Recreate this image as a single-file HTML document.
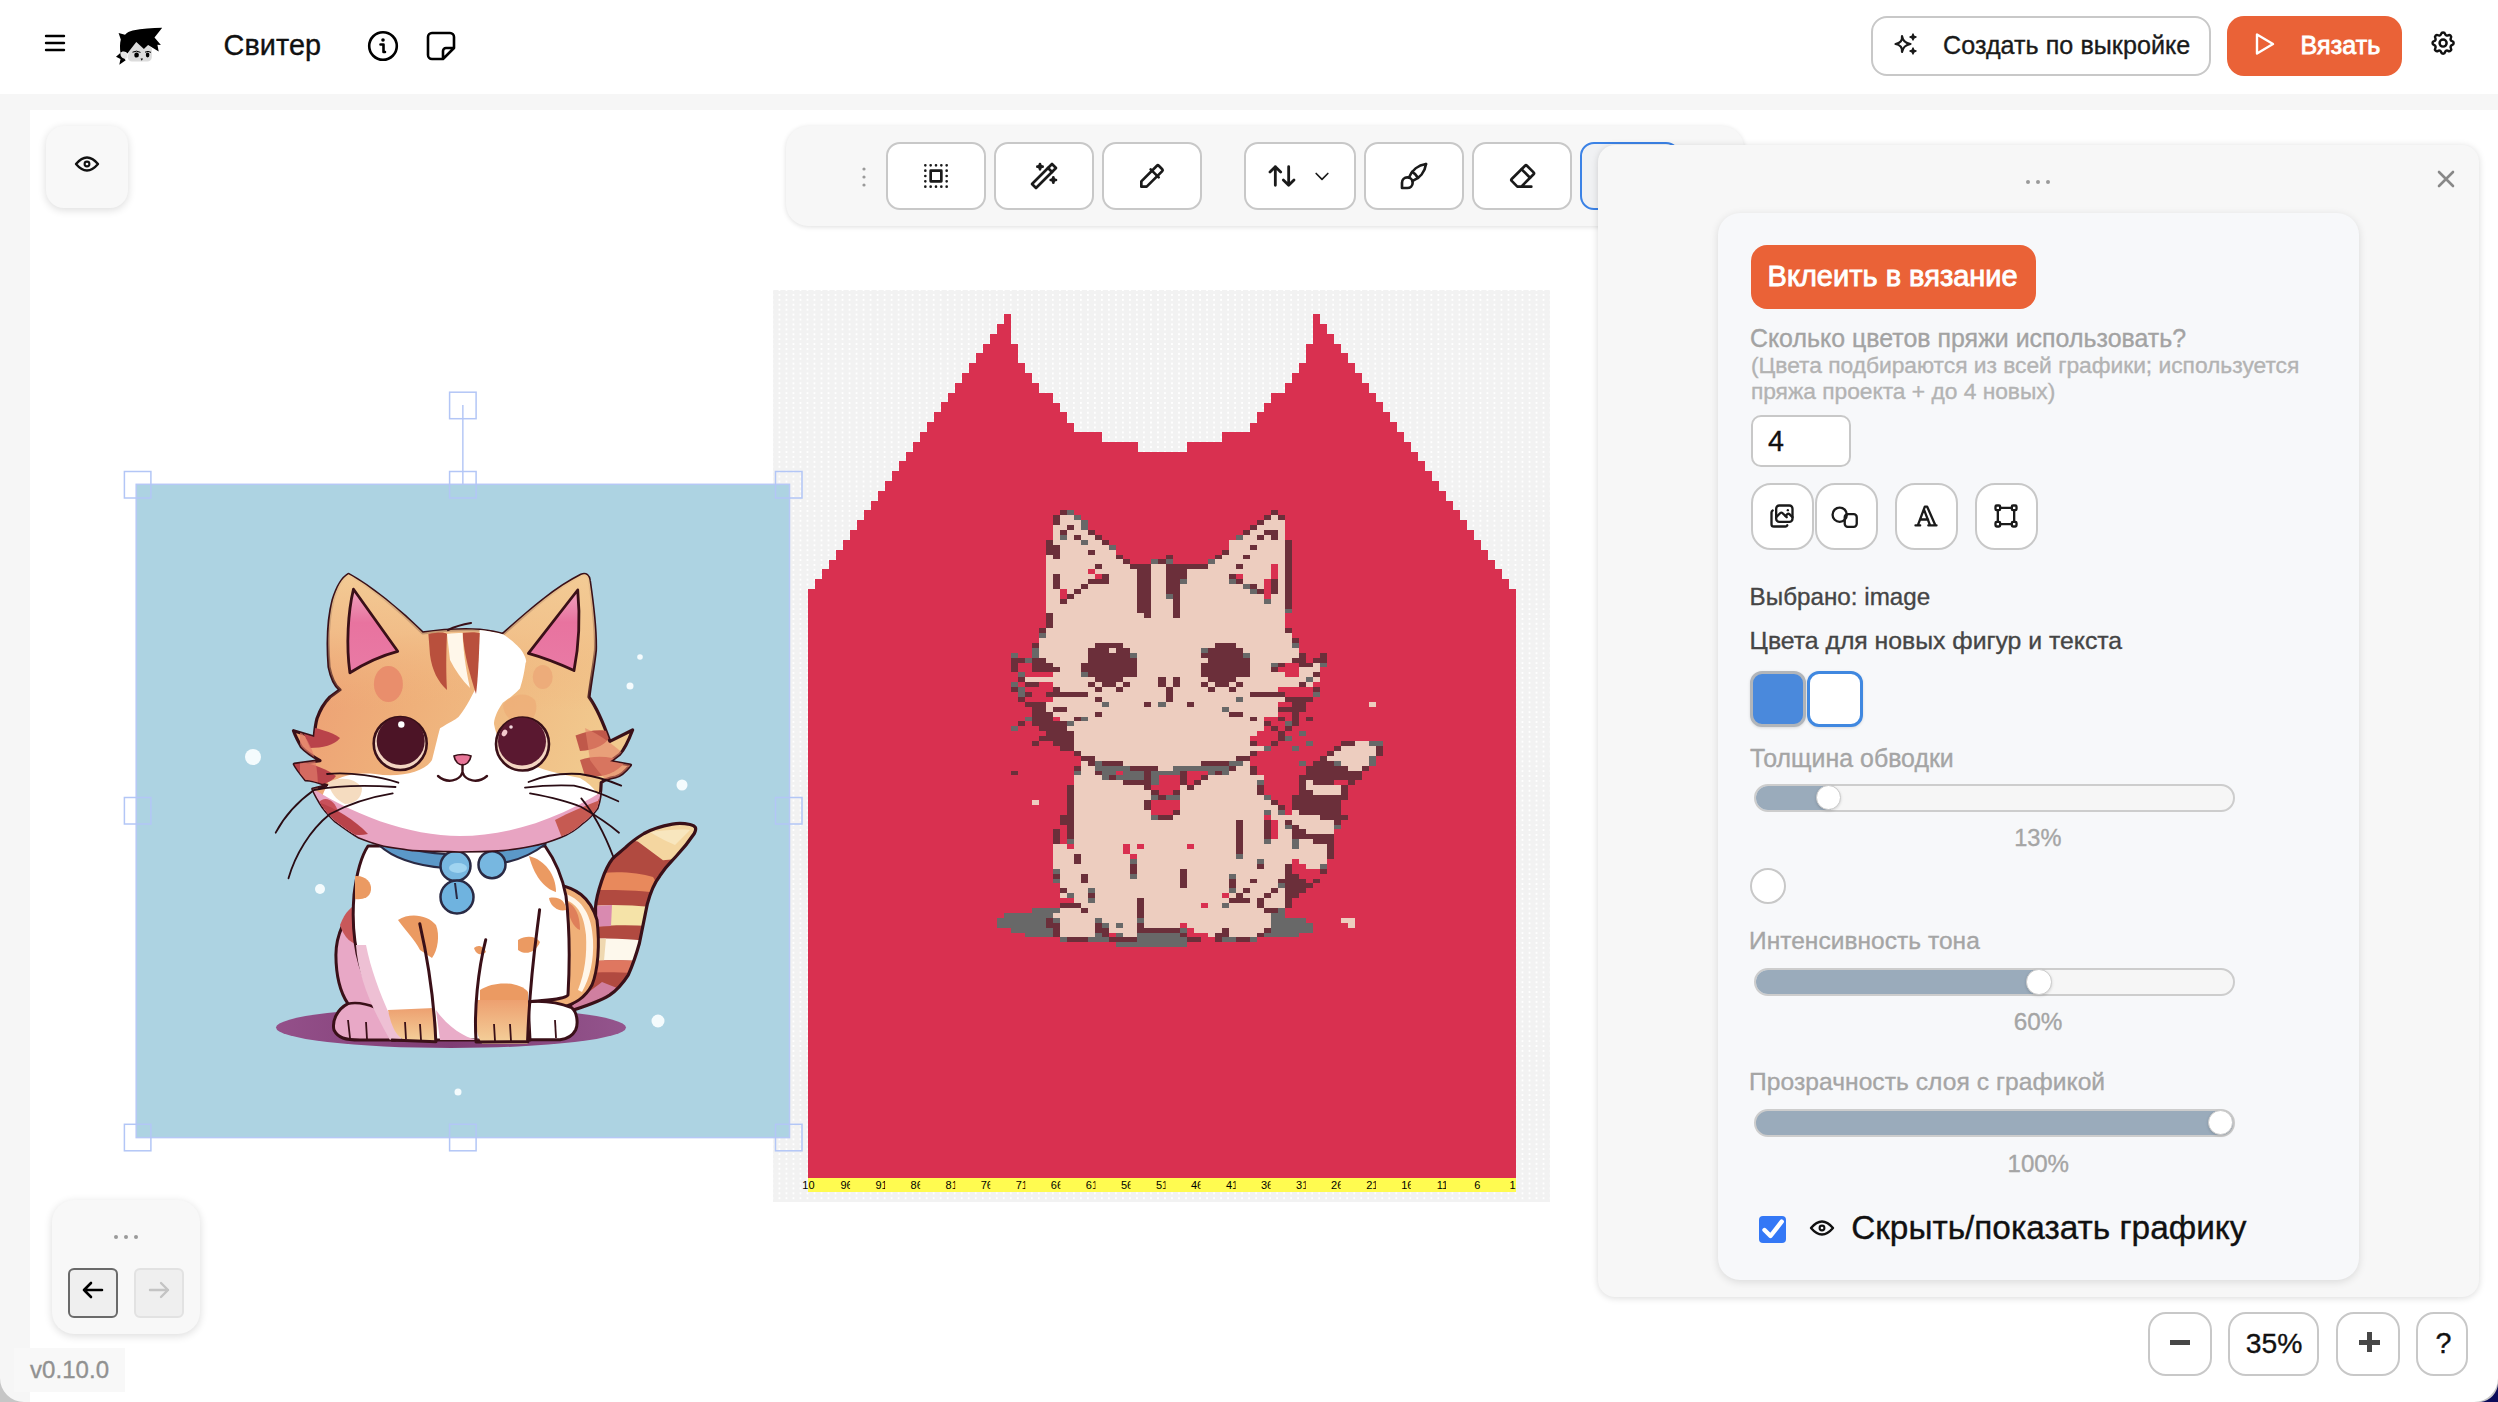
<!DOCTYPE html>
<html><head><meta charset="utf-8">
<style>
*{box-sizing:border-box;margin:0;padding:0}
html,body{width:2498px;height:1402px;overflow:hidden;background:#fff;font-family:"Liberation Sans",sans-serif;color:#111}
.a{position:absolute}
.t{position:absolute;white-space:nowrap;line-height:1;-webkit-text-stroke:0.35px currentColor}
.btn{position:absolute;background:#fff;border:2px solid #c8c8c8;border-radius:14px}
svg{position:absolute;overflow:visible}
</style></head><body>
<!-- gray band and left strip -->
<div class="a" style="left:0;top:94px;width:2498px;height:16px;background:#f6f6f6"></div>
<div class="a" style="left:0;top:94px;width:30px;height:1308px;background:#f6f6f6"></div>

<!-- HEADER -->
<svg style="left:44px;top:34px" width="22" height="18" viewBox="0 0 22 18"><g stroke="#000" stroke-width="2.4" stroke-linecap="round"><line x1="2" y1="2" x2="20" y2="2"/><line x1="2" y1="9" x2="20" y2="9"/><line x1="2" y1="16" x2="20" y2="16"/></g></svg>
<svg style="left:0;top:0" width="200" height="90" viewBox="0 0 200 90">
<path d="M128.9 51.6 L136.3 42 L143.9 49 L148.1 44.9 L152 48.4 L151.8 57.5 C151.5 60 149.5 61.5 147.5 61.5 L132 61.5 C129.5 61.5 128 59.5 127.6 57.4 Z" fill="#dcdcdc"/>
<circle cx="123.8" cy="55.5" r="3.6" fill="#e4e4e4"/>
<path d="M118.6 33 L125 34.7 C127 32.5 129.5 31.2 132.7 30.5 C142 28.7 152 28.2 162.2 27.8 L154.5 37.5 L160.9 44.9 L157.4 44.8 L158.7 51.6 L148.1 44.9 L143.9 49 L136.3 42 L128.9 51.6 L127.5 53.6 C126.5 51.8 124.6 51.2 122.5 51.6 L120.6 52.8 L116 56.8 L120.5 59 L119.3 64.8 L125.7 60.2 L124.5 58.8 C121.5 58.2 120.3 55.8 120.5 53.5 C119.8 48 119.8 43 120.8 39.5 Z" fill="#000"/>
<ellipse cx="136.6" cy="55" rx="2.3" ry="2.6" fill="#000"/><ellipse cx="147.6" cy="55" rx="1.8" ry="2.4" fill="#000"/>
<path d="M132.5 52.2 Q136.6 50 140.5 52.4 M145 52.2 Q148 50.5 151 52.4" stroke="#000" stroke-width="1" fill="none"/>
<path d="M140.5 58.5 L143 58.5 L141.8 60.8Z" fill="#000"/>
</svg>
<div class="t" style="left:223.6px;top:31.2px;font-size:28.8px;letter-spacing:0.08px;color:#111">Свитер</div>
<svg style="left:367px;top:30px" width="32" height="32" viewBox="0 0 32 32"><circle cx="16" cy="16" r="13.8" fill="none" stroke="#000" stroke-width="2.6"/><circle cx="16" cy="10" r="1.8" fill="#000"/><path d="M13.5 14.5h3v7.5h1.5" fill="none" stroke="#000" stroke-width="2.6" stroke-linecap="round" stroke-linejoin="round"/></svg>
<svg style="left:426px;top:31px" width="30" height="30" viewBox="0 0 30 30"><path d="M28 17V6a4 4 0 0 0-4-4H6a4 4 0 0 0-4 4v18a4 4 0 0 0 4 4h11z M17 28v-8a3 3 0 0 1 3-3h8" fill="none" stroke="#000" stroke-width="2.6" stroke-linejoin="round"/></svg>

<div class="btn" style="left:1871px;top:16px;width:340px;height:60px;border-radius:16px"></div>
<svg style="left:1890px;top:30px" width="30" height="30" viewBox="0 0 30 30"><path d="M12 6.2 Q12.8 12.8 5.5 14 Q12.8 15.3 12 22 Q13.2 15.3 20.5 14 Q13.2 12.8 12 6.2Z" fill="none" stroke="#1a1a1a" stroke-width="2.2" stroke-linejoin="round"/><path d="M23 4 Q23.4 6.6 26 7 Q23.4 7.4 23 10 Q22.6 7.4 20 7 Q22.6 6.6 23 4Z M23 18 Q23.4 20.6 26 21 Q23.4 21.4 23 24 Q22.6 21.4 20 21 Q22.6 20.6 23 18Z" fill="#1a1a1a" stroke="#1a1a1a" stroke-width="1.4" stroke-linejoin="round"/></svg>
<div class="t" style="left:1943.0px;top:33.2px;font-size:25.1px;letter-spacing:0.05px;color:#1a1a1a">Создать по выкройке</div>

<div class="a" style="left:2227px;top:16px;width:175px;height:60px;border-radius:17px;background:#ea6237"></div>
<svg style="left:2254px;top:32px" width="22" height="24" viewBox="0 0 22 24"><path d="M3 2.5v19l16-9.5z" fill="none" stroke="#fff" stroke-width="2.4" stroke-linejoin="round"/></svg>
<div class="t" style="left:2300.6px;top:33.1px;font-size:25.0px;letter-spacing:0.08px;-webkit-text-stroke:0.85px #fff;color:#fff">Вязать</div>
<svg style="left:2428.9px;top:28.9px" width="28.2" height="28.2" viewBox="0 0 24 24" fill="none" stroke="#111" stroke-width="2.1" stroke-linecap="round" stroke-linejoin="round"><path d="M10.325 4.317c.426-1.756 2.924-1.756 3.35 0a1.724 1.724 0 0 0 2.573 1.066c1.543-.94 3.31.826 2.37 2.37a1.724 1.724 0 0 0 1.065 2.572c1.756.426 1.756 2.924 0 3.35a1.724 1.724 0 0 0-1.066 2.573c.94 1.543-.826 3.31-2.37 2.37a1.724 1.724 0 0 0-2.572 1.065c-.426 1.756-2.924 1.756-3.35 0a1.724 1.724 0 0 0-2.573-1.066c-1.543.94-3.31-.826-2.37-2.37a1.724 1.724 0 0 0-1.065-2.572c-1.756-.426-1.756-2.924 0-3.35a1.724 1.724 0 0 0 1.066-2.573c-.94-1.543.826-3.31 2.37-2.37c1 .608 2.296.07 2.572-1.065z"/><circle cx="12" cy="12" r="3"/></svg>

<!-- LEFT eye button -->
<div class="a" style="left:46px;top:126px;width:82px;height:82px;border-radius:18px;background:#f8f8f8;box-shadow:0 2px 8px rgba(0,0,0,.14)"></div>
<svg style="left:74px;top:153px" width="26" height="22" viewBox="0 0 26 22"><path d="M2 11 Q13 -2 24 11 Q13 24 2 11Z" fill="none" stroke="#111" stroke-width="2.4" stroke-linejoin="round"/><circle cx="13" cy="11" r="2.4" fill="none" stroke="#111" stroke-width="2.1"/></svg>

<!-- CANVAS -->
<!-- SWEATER START --><svg style="left:0;top:0" width="2498" height="1402" viewBox="0 0 2498 1402" shape-rendering="crispEdges">
<defs><clipPath id="lc0"><rect x="791.5" y="1170" width="23.5" height="30"/></clipPath><clipPath id="lc1"><rect x="826.6" y="1170" width="23.5" height="30"/></clipPath><clipPath id="lc2"><rect x="861.6" y="1170" width="23.5" height="30"/></clipPath><clipPath id="lc3"><rect x="896.7" y="1170" width="23.5" height="30"/></clipPath><clipPath id="lc4"><rect x="931.7" y="1170" width="23.5" height="30"/></clipPath><clipPath id="lc5"><rect x="966.8" y="1170" width="23.5" height="30"/></clipPath><clipPath id="lc6"><rect x="1001.8" y="1170" width="23.5" height="30"/></clipPath><clipPath id="lc7"><rect x="1036.9" y="1170" width="23.5" height="30"/></clipPath><clipPath id="lc8"><rect x="1071.9" y="1170" width="23.5" height="30"/></clipPath><clipPath id="lc9"><rect x="1107.0" y="1170" width="23.5" height="30"/></clipPath><clipPath id="lc10"><rect x="1142.0" y="1170" width="23.5" height="30"/></clipPath><clipPath id="lc11"><rect x="1177.0" y="1170" width="23.5" height="30"/></clipPath><clipPath id="lc12"><rect x="1212.1" y="1170" width="23.5" height="30"/></clipPath><clipPath id="lc13"><rect x="1247.1" y="1170" width="23.5" height="30"/></clipPath><clipPath id="lc14"><rect x="1282.2" y="1170" width="23.5" height="30"/></clipPath><clipPath id="lc15"><rect x="1317.2" y="1170" width="23.5" height="30"/></clipPath><clipPath id="lc16"><rect x="1352.3" y="1170" width="23.5" height="30"/></clipPath><clipPath id="lc17"><rect x="1387.3" y="1170" width="23.5" height="30"/></clipPath><clipPath id="lc18"><rect x="1422.4" y="1170" width="23.5" height="30"/></clipPath><clipPath id="lc19"><rect x="1457.4" y="1170" width="23.5" height="30"/></clipPath><clipPath id="lc20"><rect x="1492.5" y="1170" width="23.5" height="30"/></clipPath><pattern id="dots" x="806.6" y="313.6" width="7.0099" height="4.909" patternUnits="userSpaceOnUse"><rect width="7.0099" height="4.909" fill="#f2f2f2"/><rect x="0" y="0" width="1.7" height="1.6" fill="#ffffff"/></pattern></defs>
<rect x="773" y="290" width="777" height="912" fill="url(#dots)"/>
<path d="M808.0 1178.0 L808.0 589.0 L815.0 589.0 L815.0 579.2 L822.0 579.2 L822.0 569.4 L829.0 569.4 L829.0 559.5 L836.0 559.5 L836.0 549.7 L843.0 549.7 L843.0 539.9 L850.1 539.9 L850.1 530.1 L857.1 530.1 L857.1 520.3 L864.1 520.3 L864.1 510.4 L871.1 510.4 L871.1 500.6 L878.1 500.6 L878.1 490.8 L885.1 490.8 L885.1 481.0 L892.1 481.0 L892.1 471.2 L899.1 471.2 L899.1 461.3 L906.1 461.3 L906.1 451.5 L913.1 451.5 L913.1 441.7 L920.2 441.7 L920.2 431.9 L927.2 431.9 L927.2 422.1 L934.2 422.1 L934.2 412.2 L941.2 412.2 L941.2 402.4 L948.2 402.4 L948.2 392.6 L955.2 392.6 L955.2 382.8 L962.2 382.8 L962.2 373.0 L969.2 373.0 L969.2 363.1 L976.2 363.1 L976.2 353.3 L983.2 353.3 L983.2 343.5 L990.3 343.5 L990.3 333.7 L997.3 333.7 L997.3 323.9 L1004.3 323.9 L1004.3 314.0 L1011.3 314.0 L1011.3 343.7 L1018.3 343.7 L1018.3 363.0 L1025.3 363.0 L1025.3 372.9 L1032.3 372.9 L1032.3 383.0 L1039.3 383.0 L1039.3 392.9 L1046.3 392.9 L1046.3 392.9 L1053.3 392.9 L1053.3 403.0 L1060.4 403.0 L1060.4 412.4 L1067.4 412.4 L1067.4 423.0 L1074.4 423.0 L1074.4 432.4 L1081.4 432.4 L1081.4 432.4 L1088.4 432.4 L1088.4 432.4 L1095.4 432.4 L1095.4 432.4 L1102.4 432.4 L1102.4 441.9 L1109.4 441.9 L1109.4 441.9 L1116.4 441.9 L1116.4 441.9 L1123.4 441.9 L1123.4 441.9 L1130.5 441.9 L1130.5 441.9 L1137.5 441.9 L1137.5 452.0 L1144.5 452.0 L1144.5 452.0 L1151.5 452.0 L1151.5 452.0 L1158.5 452.0 L1158.5 452.0 L1165.5 452.0 L1165.5 452.0 L1172.5 452.0 L1172.5 452.0 L1179.5 452.0 L1179.5 452.0 L1186.5 452.0 L1186.5 441.9 L1193.5 441.9 L1193.5 441.9 L1200.6 441.9 L1200.6 441.9 L1207.6 441.9 L1207.6 441.9 L1214.6 441.9 L1214.6 441.9 L1221.6 441.9 L1221.6 432.4 L1228.6 432.4 L1228.6 432.4 L1235.6 432.4 L1235.6 432.4 L1242.6 432.4 L1242.6 432.4 L1249.6 432.4 L1249.6 423.0 L1256.6 423.0 L1256.6 412.4 L1263.6 412.4 L1263.6 403.0 L1270.7 403.0 L1270.7 392.9 L1277.7 392.9 L1277.7 392.9 L1284.7 392.9 L1284.7 383.0 L1291.7 383.0 L1291.7 372.9 L1298.7 372.9 L1298.7 363.0 L1305.7 363.0 L1305.7 343.7 L1312.7 343.7 L1312.7 314.0 L1319.7 314.0 L1319.7 323.9 L1326.7 323.9 L1326.7 333.7 L1333.7 333.7 L1333.7 343.5 L1340.8 343.5 L1340.8 353.3 L1347.8 353.3 L1347.8 363.1 L1354.8 363.1 L1354.8 373.0 L1361.8 373.0 L1361.8 382.8 L1368.8 382.8 L1368.8 392.6 L1375.8 392.6 L1375.8 402.4 L1382.8 402.4 L1382.8 412.2 L1389.8 412.2 L1389.8 422.1 L1396.8 422.1 L1396.8 431.9 L1403.8 431.9 L1403.8 441.7 L1410.9 441.7 L1410.9 451.5 L1417.9 451.5 L1417.9 461.3 L1424.9 461.3 L1424.9 471.2 L1431.9 471.2 L1431.9 481.0 L1438.9 481.0 L1438.9 490.8 L1445.9 490.8 L1445.9 500.6 L1452.9 500.6 L1452.9 510.4 L1459.9 510.4 L1459.9 520.3 L1466.9 520.3 L1466.9 530.1 L1473.9 530.1 L1473.9 539.9 L1481.0 539.9 L1481.0 549.7 L1488.0 549.7 L1488.0 559.5 L1495.0 559.5 L1495.0 569.4 L1502.0 569.4 L1502.0 579.2 L1509.0 579.2 L1509.0 589.0 L1516.0 589.0 L1516.0 1178.0Z" fill="#d93050"/>
<rect x="1060.36" y="510.36" width="7.01" height="4.91" fill="#6b2f3a"/><rect x="1067.37" y="510.36" width="7.01" height="4.91" fill="#686868"/><rect x="1270.65" y="510.36" width="7.01" height="4.91" fill="#6b2f3a"/><rect x="1053.35" y="515.27" width="7.01" height="4.91" fill="#6b2f3a"/><rect x="1060.36" y="515.27" width="14.02" height="4.91" fill="#edcdbf"/><rect x="1074.38" y="515.27" width="7.01" height="4.91" fill="#686868"/><rect x="1263.64" y="515.27" width="7.01" height="4.91" fill="#6b2f3a"/><rect x="1270.65" y="515.27" width="7.01" height="4.91" fill="#edcdbf"/><rect x="1277.66" y="515.27" width="7.01" height="4.91" fill="#6b2f3a"/><rect x="1053.35" y="520.18" width="7.01" height="4.91" fill="#6b2f3a"/><rect x="1060.36" y="520.18" width="21.03" height="4.91" fill="#edcdbf"/><rect x="1081.39" y="520.18" width="7.01" height="4.91" fill="#686868"/><rect x="1256.63" y="520.18" width="7.01" height="4.91" fill="#6b2f3a"/><rect x="1263.64" y="520.18" width="21.03" height="4.91" fill="#edcdbf"/><rect x="1053.35" y="525.09" width="14.02" height="4.91" fill="#edcdbf"/><rect x="1067.37" y="525.09" width="7.01" height="4.91" fill="#6b2f3a"/><rect x="1074.38" y="525.09" width="7.01" height="4.91" fill="#edcdbf"/><rect x="1081.39" y="525.09" width="7.01" height="4.91" fill="#686868"/><rect x="1249.62" y="525.09" width="7.01" height="4.91" fill="#6b2f3a"/><rect x="1256.63" y="525.09" width="28.04" height="4.91" fill="#edcdbf"/><rect x="1053.35" y="530.00" width="7.01" height="4.91" fill="#edcdbf"/><rect x="1060.36" y="530.00" width="7.01" height="4.91" fill="#6b2f3a"/><rect x="1067.37" y="530.00" width="21.03" height="4.91" fill="#edcdbf"/><rect x="1088.40" y="530.00" width="7.01" height="4.91" fill="#6b2f3a"/><rect x="1242.61" y="530.00" width="7.01" height="4.91" fill="#6b2f3a"/><rect x="1249.62" y="530.00" width="14.02" height="4.91" fill="#edcdbf"/><rect x="1263.64" y="530.00" width="14.02" height="4.91" fill="#6b2f3a"/><rect x="1277.66" y="530.00" width="7.01" height="4.91" fill="#edcdbf"/><rect x="1053.35" y="534.91" width="7.01" height="4.91" fill="#edcdbf"/><rect x="1060.36" y="534.91" width="7.01" height="4.91" fill="#686868"/><rect x="1067.37" y="534.91" width="7.01" height="4.91" fill="#edcdbf"/><rect x="1074.38" y="534.91" width="7.01" height="4.91" fill="#6b2f3a"/><rect x="1081.39" y="534.91" width="14.02" height="4.91" fill="#edcdbf"/><rect x="1095.41" y="534.91" width="7.01" height="4.91" fill="#6b2f3a"/><rect x="1235.60" y="534.91" width="7.01" height="4.91" fill="#686868"/><rect x="1242.61" y="534.91" width="14.02" height="4.91" fill="#edcdbf"/><rect x="1256.63" y="534.91" width="7.01" height="4.91" fill="#6b2f3a"/><rect x="1263.64" y="534.91" width="7.01" height="4.91" fill="#edcdbf"/><rect x="1270.65" y="534.91" width="7.01" height="4.91" fill="#6b2f3a"/><rect x="1277.66" y="534.91" width="7.01" height="4.91" fill="#edcdbf"/><rect x="1046.34" y="539.82" width="7.01" height="4.91" fill="#6b2f3a"/><rect x="1053.35" y="539.82" width="28.04" height="4.91" fill="#edcdbf"/><rect x="1081.39" y="539.82" width="7.01" height="4.91" fill="#686868"/><rect x="1088.40" y="539.82" width="14.02" height="4.91" fill="#edcdbf"/><rect x="1102.42" y="539.82" width="7.01" height="4.91" fill="#6b2f3a"/><rect x="1228.59" y="539.82" width="56.08" height="4.91" fill="#edcdbf"/><rect x="1284.67" y="539.82" width="7.01" height="4.91" fill="#6b2f3a"/><rect x="1046.34" y="544.73" width="14.02" height="4.91" fill="#6b2f3a"/><rect x="1060.36" y="544.73" width="49.07" height="4.91" fill="#edcdbf"/><rect x="1109.43" y="544.73" width="7.01" height="4.91" fill="#686868"/><rect x="1228.59" y="544.73" width="21.03" height="4.91" fill="#edcdbf"/><rect x="1249.62" y="544.73" width="7.01" height="4.91" fill="#6b2f3a"/><rect x="1256.63" y="544.73" width="28.04" height="4.91" fill="#edcdbf"/><rect x="1284.67" y="544.73" width="7.01" height="4.91" fill="#6b2f3a"/><rect x="1046.34" y="549.64" width="14.02" height="4.91" fill="#6b2f3a"/><rect x="1060.36" y="549.64" width="28.04" height="4.91" fill="#edcdbf"/><rect x="1088.40" y="549.64" width="7.01" height="4.91" fill="#6b2f3a"/><rect x="1095.41" y="549.64" width="21.03" height="4.91" fill="#edcdbf"/><rect x="1221.58" y="549.64" width="7.01" height="4.91" fill="#6b2f3a"/><rect x="1228.59" y="549.64" width="56.08" height="4.91" fill="#edcdbf"/><rect x="1284.67" y="549.64" width="7.01" height="4.91" fill="#6b2f3a"/><rect x="1046.34" y="554.55" width="7.01" height="4.91" fill="#edcdbf"/><rect x="1053.35" y="554.55" width="7.01" height="4.91" fill="#6b2f3a"/><rect x="1060.36" y="554.55" width="56.08" height="4.91" fill="#edcdbf"/><rect x="1116.44" y="554.55" width="7.01" height="4.91" fill="#6b2f3a"/><rect x="1165.50" y="554.55" width="7.01" height="4.91" fill="#6b2f3a"/><rect x="1214.57" y="554.55" width="7.01" height="4.91" fill="#6b2f3a"/><rect x="1221.58" y="554.55" width="21.03" height="4.91" fill="#edcdbf"/><rect x="1242.61" y="554.55" width="7.01" height="4.91" fill="#6b2f3a"/><rect x="1249.62" y="554.55" width="35.05" height="4.91" fill="#edcdbf"/><rect x="1284.67" y="554.55" width="7.01" height="4.91" fill="#6b2f3a"/><rect x="1046.34" y="559.45" width="77.11" height="4.91" fill="#edcdbf"/><rect x="1123.45" y="559.45" width="7.01" height="4.91" fill="#6b2f3a"/><rect x="1151.49" y="559.45" width="7.01" height="4.91" fill="#686868"/><rect x="1158.49" y="559.45" width="7.01" height="4.91" fill="#6b2f3a"/><rect x="1165.50" y="559.45" width="7.01" height="4.91" fill="#686868"/><rect x="1207.56" y="559.45" width="7.01" height="4.91" fill="#686868"/><rect x="1214.57" y="559.45" width="70.10" height="4.91" fill="#edcdbf"/><rect x="1284.67" y="559.45" width="7.01" height="4.91" fill="#6b2f3a"/><rect x="1046.34" y="564.36" width="49.07" height="4.91" fill="#edcdbf"/><rect x="1095.41" y="564.36" width="7.01" height="4.91" fill="#6b2f3a"/><rect x="1102.42" y="564.36" width="28.04" height="4.91" fill="#edcdbf"/><rect x="1130.46" y="564.36" width="21.03" height="4.91" fill="#6b2f3a"/><rect x="1151.49" y="564.36" width="14.02" height="4.91" fill="#edcdbf"/><rect x="1165.50" y="564.36" width="42.06" height="4.91" fill="#6b2f3a"/><rect x="1207.56" y="564.36" width="28.04" height="4.91" fill="#edcdbf"/><rect x="1235.60" y="564.36" width="7.01" height="4.91" fill="#6b2f3a"/><rect x="1242.61" y="564.36" width="28.04" height="4.91" fill="#edcdbf"/><rect x="1277.66" y="564.36" width="7.01" height="4.91" fill="#edcdbf"/><rect x="1284.67" y="564.36" width="7.01" height="4.91" fill="#6b2f3a"/><rect x="1046.34" y="569.27" width="42.06" height="4.91" fill="#edcdbf"/><rect x="1095.41" y="569.27" width="42.06" height="4.91" fill="#edcdbf"/><rect x="1137.47" y="569.27" width="14.02" height="4.91" fill="#6b2f3a"/><rect x="1151.49" y="569.27" width="14.02" height="4.91" fill="#edcdbf"/><rect x="1165.50" y="569.27" width="21.03" height="4.91" fill="#6b2f3a"/><rect x="1186.53" y="569.27" width="84.12" height="4.91" fill="#edcdbf"/><rect x="1277.66" y="569.27" width="7.01" height="4.91" fill="#edcdbf"/><rect x="1284.67" y="569.27" width="7.01" height="4.91" fill="#6b2f3a"/><rect x="1046.34" y="574.18" width="7.01" height="4.91" fill="#edcdbf"/><rect x="1053.35" y="574.18" width="7.01" height="4.91" fill="#6b2f3a"/><rect x="1060.36" y="574.18" width="35.05" height="4.91" fill="#edcdbf"/><rect x="1102.42" y="574.18" width="7.01" height="4.91" fill="#6b2f3a"/><rect x="1109.43" y="574.18" width="28.04" height="4.91" fill="#edcdbf"/><rect x="1137.47" y="574.18" width="14.02" height="4.91" fill="#6b2f3a"/><rect x="1151.49" y="574.18" width="14.02" height="4.91" fill="#edcdbf"/><rect x="1165.50" y="574.18" width="21.03" height="4.91" fill="#6b2f3a"/><rect x="1186.53" y="574.18" width="42.06" height="4.91" fill="#edcdbf"/><rect x="1228.59" y="574.18" width="7.01" height="4.91" fill="#6b2f3a"/><rect x="1242.61" y="574.18" width="28.04" height="4.91" fill="#edcdbf"/><rect x="1277.66" y="574.18" width="7.01" height="4.91" fill="#edcdbf"/><rect x="1284.67" y="574.18" width="7.01" height="4.91" fill="#6b2f3a"/><rect x="1046.34" y="579.09" width="7.01" height="4.91" fill="#edcdbf"/><rect x="1053.35" y="579.09" width="7.01" height="4.91" fill="#6b2f3a"/><rect x="1060.36" y="579.09" width="28.04" height="4.91" fill="#edcdbf"/><rect x="1088.40" y="579.09" width="21.03" height="4.91" fill="#6b2f3a"/><rect x="1109.43" y="579.09" width="28.04" height="4.91" fill="#edcdbf"/><rect x="1137.47" y="579.09" width="14.02" height="4.91" fill="#6b2f3a"/><rect x="1151.49" y="579.09" width="14.02" height="4.91" fill="#edcdbf"/><rect x="1165.50" y="579.09" width="14.02" height="4.91" fill="#6b2f3a"/><rect x="1179.52" y="579.09" width="7.01" height="4.91" fill="#686868"/><rect x="1186.53" y="579.09" width="42.06" height="4.91" fill="#edcdbf"/><rect x="1228.59" y="579.09" width="7.01" height="4.91" fill="#686868"/><rect x="1235.60" y="579.09" width="7.01" height="4.91" fill="#6b2f3a"/><rect x="1242.61" y="579.09" width="21.03" height="4.91" fill="#edcdbf"/><rect x="1270.65" y="579.09" width="7.01" height="4.91" fill="#6b2f3a"/><rect x="1277.66" y="579.09" width="7.01" height="4.91" fill="#edcdbf"/><rect x="1284.67" y="579.09" width="7.01" height="4.91" fill="#6b2f3a"/><rect x="1046.34" y="584.00" width="7.01" height="4.91" fill="#edcdbf"/><rect x="1053.35" y="584.00" width="7.01" height="4.91" fill="#6b2f3a"/><rect x="1060.36" y="584.00" width="21.03" height="4.91" fill="#edcdbf"/><rect x="1081.39" y="584.00" width="7.01" height="4.91" fill="#6b2f3a"/><rect x="1088.40" y="584.00" width="49.07" height="4.91" fill="#edcdbf"/><rect x="1137.47" y="584.00" width="14.02" height="4.91" fill="#6b2f3a"/><rect x="1151.49" y="584.00" width="14.02" height="4.91" fill="#edcdbf"/><rect x="1165.50" y="584.00" width="14.02" height="4.91" fill="#6b2f3a"/><rect x="1179.52" y="584.00" width="63.09" height="4.91" fill="#edcdbf"/><rect x="1242.61" y="584.00" width="7.01" height="4.91" fill="#686868"/><rect x="1249.62" y="584.00" width="7.01" height="4.91" fill="#6b2f3a"/><rect x="1256.63" y="584.00" width="7.01" height="4.91" fill="#edcdbf"/><rect x="1270.65" y="584.00" width="7.01" height="4.91" fill="#6b2f3a"/><rect x="1277.66" y="584.00" width="7.01" height="4.91" fill="#edcdbf"/><rect x="1284.67" y="584.00" width="7.01" height="4.91" fill="#6b2f3a"/><rect x="1046.34" y="588.91" width="14.02" height="4.91" fill="#edcdbf"/><rect x="1067.37" y="588.91" width="7.01" height="4.91" fill="#edcdbf"/><rect x="1074.38" y="588.91" width="7.01" height="4.91" fill="#6b2f3a"/><rect x="1081.39" y="588.91" width="56.08" height="4.91" fill="#edcdbf"/><rect x="1137.47" y="588.91" width="14.02" height="4.91" fill="#6b2f3a"/><rect x="1151.49" y="588.91" width="14.02" height="4.91" fill="#edcdbf"/><rect x="1165.50" y="588.91" width="14.02" height="4.91" fill="#6b2f3a"/><rect x="1179.52" y="588.91" width="70.10" height="4.91" fill="#edcdbf"/><rect x="1249.62" y="588.91" width="7.01" height="4.91" fill="#686868"/><rect x="1256.63" y="588.91" width="7.01" height="4.91" fill="#6b2f3a"/><rect x="1270.65" y="588.91" width="7.01" height="4.91" fill="#6b2f3a"/><rect x="1277.66" y="588.91" width="7.01" height="4.91" fill="#edcdbf"/><rect x="1284.67" y="588.91" width="7.01" height="4.91" fill="#6b2f3a"/><rect x="1046.34" y="593.82" width="14.02" height="4.91" fill="#edcdbf"/><rect x="1067.37" y="593.82" width="7.01" height="4.91" fill="#6b2f3a"/><rect x="1074.38" y="593.82" width="63.09" height="4.91" fill="#edcdbf"/><rect x="1137.47" y="593.82" width="14.02" height="4.91" fill="#6b2f3a"/><rect x="1151.49" y="593.82" width="14.02" height="4.91" fill="#edcdbf"/><rect x="1165.50" y="593.82" width="7.01" height="4.91" fill="#686868"/><rect x="1172.51" y="593.82" width="7.01" height="4.91" fill="#6b2f3a"/><rect x="1179.52" y="593.82" width="84.12" height="4.91" fill="#edcdbf"/><rect x="1270.65" y="593.82" width="14.02" height="4.91" fill="#edcdbf"/><rect x="1284.67" y="593.82" width="7.01" height="4.91" fill="#6b2f3a"/><rect x="1046.34" y="598.73" width="14.02" height="4.91" fill="#edcdbf"/><rect x="1060.36" y="598.73" width="7.01" height="4.91" fill="#6b2f3a"/><rect x="1067.37" y="598.73" width="70.10" height="4.91" fill="#edcdbf"/><rect x="1137.47" y="598.73" width="14.02" height="4.91" fill="#6b2f3a"/><rect x="1151.49" y="598.73" width="21.03" height="4.91" fill="#edcdbf"/><rect x="1172.51" y="598.73" width="7.01" height="4.91" fill="#6b2f3a"/><rect x="1179.52" y="598.73" width="84.12" height="4.91" fill="#edcdbf"/><rect x="1263.64" y="598.73" width="7.01" height="4.91" fill="#686868"/><rect x="1270.65" y="598.73" width="14.02" height="4.91" fill="#edcdbf"/><rect x="1284.67" y="598.73" width="7.01" height="4.91" fill="#6b2f3a"/><rect x="1046.34" y="603.64" width="91.13" height="4.91" fill="#edcdbf"/><rect x="1137.47" y="603.64" width="14.02" height="4.91" fill="#6b2f3a"/><rect x="1151.49" y="603.64" width="21.03" height="4.91" fill="#edcdbf"/><rect x="1172.51" y="603.64" width="7.01" height="4.91" fill="#6b2f3a"/><rect x="1179.52" y="603.64" width="105.15" height="4.91" fill="#edcdbf"/><rect x="1284.67" y="603.64" width="7.01" height="4.91" fill="#6b2f3a"/><rect x="1046.34" y="608.55" width="91.13" height="4.91" fill="#edcdbf"/><rect x="1137.47" y="608.55" width="14.02" height="4.91" fill="#6b2f3a"/><rect x="1151.49" y="608.55" width="21.03" height="4.91" fill="#edcdbf"/><rect x="1172.51" y="608.55" width="7.01" height="4.91" fill="#6b2f3a"/><rect x="1179.52" y="608.55" width="105.15" height="4.91" fill="#edcdbf"/><rect x="1284.67" y="608.55" width="7.01" height="4.91" fill="#686868"/><rect x="1046.34" y="613.45" width="7.01" height="4.91" fill="#6b2f3a"/><rect x="1053.35" y="613.45" width="91.13" height="4.91" fill="#edcdbf"/><rect x="1144.48" y="613.45" width="7.01" height="4.91" fill="#6b2f3a"/><rect x="1151.49" y="613.45" width="21.03" height="4.91" fill="#edcdbf"/><rect x="1172.51" y="613.45" width="7.01" height="4.91" fill="#6b2f3a"/><rect x="1179.52" y="613.45" width="105.15" height="4.91" fill="#edcdbf"/><rect x="1046.34" y="618.36" width="7.01" height="4.91" fill="#6b2f3a"/><rect x="1053.35" y="618.36" width="231.33" height="4.91" fill="#edcdbf"/><rect x="1046.34" y="623.27" width="7.01" height="4.91" fill="#6b2f3a"/><rect x="1053.35" y="623.27" width="231.33" height="4.91" fill="#edcdbf"/><rect x="1039.33" y="628.18" width="7.01" height="4.91" fill="#6b2f3a"/><rect x="1046.34" y="628.18" width="238.34" height="4.91" fill="#edcdbf"/><rect x="1284.67" y="628.18" width="7.01" height="4.91" fill="#6b2f3a"/><rect x="1039.33" y="633.09" width="7.01" height="4.91" fill="#686868"/><rect x="1046.34" y="633.09" width="245.35" height="4.91" fill="#edcdbf"/><rect x="1039.33" y="638.00" width="252.36" height="4.91" fill="#edcdbf"/><rect x="1291.68" y="638.00" width="7.01" height="4.91" fill="#6b2f3a"/><rect x="1032.32" y="642.91" width="7.01" height="4.91" fill="#6b2f3a"/><rect x="1039.33" y="642.91" width="56.08" height="4.91" fill="#edcdbf"/><rect x="1095.41" y="642.91" width="28.04" height="4.91" fill="#6b2f3a"/><rect x="1123.45" y="642.91" width="91.13" height="4.91" fill="#edcdbf"/><rect x="1214.57" y="642.91" width="21.03" height="4.91" fill="#6b2f3a"/><rect x="1235.60" y="642.91" width="56.08" height="4.91" fill="#edcdbf"/><rect x="1291.68" y="642.91" width="7.01" height="4.91" fill="#686868"/><rect x="1032.32" y="647.82" width="7.01" height="4.91" fill="#686868"/><rect x="1039.33" y="647.82" width="49.07" height="4.91" fill="#edcdbf"/><rect x="1088.40" y="647.82" width="21.03" height="4.91" fill="#6b2f3a"/><rect x="1109.43" y="647.82" width="7.01" height="4.91" fill="#edcdbf"/><rect x="1116.44" y="647.82" width="14.02" height="4.91" fill="#6b2f3a"/><rect x="1130.46" y="647.82" width="70.10" height="4.91" fill="#edcdbf"/><rect x="1200.55" y="647.82" width="7.01" height="4.91" fill="#686868"/><rect x="1207.56" y="647.82" width="35.05" height="4.91" fill="#6b2f3a"/><rect x="1242.61" y="647.82" width="56.08" height="4.91" fill="#edcdbf"/><rect x="1011.29" y="652.73" width="7.01" height="4.91" fill="#686868"/><rect x="1032.32" y="652.73" width="7.01" height="4.91" fill="#686868"/><rect x="1039.33" y="652.73" width="49.07" height="4.91" fill="#edcdbf"/><rect x="1088.40" y="652.73" width="42.06" height="4.91" fill="#6b2f3a"/><rect x="1130.46" y="652.73" width="7.01" height="4.91" fill="#686868"/><rect x="1137.47" y="652.73" width="63.09" height="4.91" fill="#edcdbf"/><rect x="1200.55" y="652.73" width="42.06" height="4.91" fill="#6b2f3a"/><rect x="1242.61" y="652.73" width="7.01" height="4.91" fill="#686868"/><rect x="1249.62" y="652.73" width="49.07" height="4.91" fill="#edcdbf"/><rect x="1298.69" y="652.73" width="7.01" height="4.91" fill="#6b2f3a"/><rect x="1319.72" y="652.73" width="7.01" height="4.91" fill="#6b2f3a"/><rect x="1011.29" y="657.64" width="14.02" height="4.91" fill="#6b2f3a"/><rect x="1025.31" y="657.64" width="7.01" height="4.91" fill="#686868"/><rect x="1032.32" y="657.64" width="14.02" height="4.91" fill="#6b2f3a"/><rect x="1046.34" y="657.64" width="42.06" height="4.91" fill="#edcdbf"/><rect x="1088.40" y="657.64" width="49.07" height="4.91" fill="#6b2f3a"/><rect x="1137.47" y="657.64" width="70.10" height="4.91" fill="#edcdbf"/><rect x="1207.56" y="657.64" width="42.06" height="4.91" fill="#6b2f3a"/><rect x="1249.62" y="657.64" width="42.06" height="4.91" fill="#edcdbf"/><rect x="1291.68" y="657.64" width="14.02" height="4.91" fill="#6b2f3a"/><rect x="1312.71" y="657.64" width="14.02" height="4.91" fill="#6b2f3a"/><rect x="1011.29" y="662.55" width="7.01" height="4.91" fill="#6b2f3a"/><rect x="1032.32" y="662.55" width="21.03" height="4.91" fill="#6b2f3a"/><rect x="1053.35" y="662.55" width="28.04" height="4.91" fill="#edcdbf"/><rect x="1081.39" y="662.55" width="56.08" height="4.91" fill="#6b2f3a"/><rect x="1137.47" y="662.55" width="63.09" height="4.91" fill="#edcdbf"/><rect x="1200.55" y="662.55" width="49.07" height="4.91" fill="#6b2f3a"/><rect x="1249.62" y="662.55" width="21.03" height="4.91" fill="#edcdbf"/><rect x="1270.65" y="662.55" width="7.01" height="4.91" fill="#686868"/><rect x="1277.66" y="662.55" width="7.01" height="4.91" fill="#6b2f3a"/><rect x="1298.69" y="662.55" width="14.02" height="4.91" fill="#6b2f3a"/><rect x="1312.71" y="662.55" width="7.01" height="4.91" fill="#edcdbf"/><rect x="1319.72" y="662.55" width="7.01" height="4.91" fill="#686868"/><rect x="1011.29" y="667.45" width="7.01" height="4.91" fill="#6b2f3a"/><rect x="1032.32" y="667.45" width="28.04" height="4.91" fill="#6b2f3a"/><rect x="1060.36" y="667.45" width="21.03" height="4.91" fill="#edcdbf"/><rect x="1081.39" y="667.45" width="56.08" height="4.91" fill="#6b2f3a"/><rect x="1137.47" y="667.45" width="63.09" height="4.91" fill="#edcdbf"/><rect x="1200.55" y="667.45" width="49.07" height="4.91" fill="#6b2f3a"/><rect x="1249.62" y="667.45" width="21.03" height="4.91" fill="#edcdbf"/><rect x="1270.65" y="667.45" width="7.01" height="4.91" fill="#6b2f3a"/><rect x="1298.69" y="667.45" width="21.03" height="4.91" fill="#edcdbf"/><rect x="1018.30" y="672.36" width="7.01" height="4.91" fill="#686868"/><rect x="1053.35" y="672.36" width="28.04" height="4.91" fill="#edcdbf"/><rect x="1081.39" y="672.36" width="7.01" height="4.91" fill="#686868"/><rect x="1088.40" y="672.36" width="49.07" height="4.91" fill="#6b2f3a"/><rect x="1137.47" y="672.36" width="63.09" height="4.91" fill="#edcdbf"/><rect x="1200.55" y="672.36" width="49.07" height="4.91" fill="#6b2f3a"/><rect x="1249.62" y="672.36" width="35.05" height="4.91" fill="#edcdbf"/><rect x="1298.69" y="672.36" width="14.02" height="4.91" fill="#edcdbf"/><rect x="1312.71" y="672.36" width="7.01" height="4.91" fill="#6b2f3a"/><rect x="1018.30" y="677.27" width="7.01" height="4.91" fill="#6b2f3a"/><rect x="1025.31" y="677.27" width="70.10" height="4.91" fill="#edcdbf"/><rect x="1095.41" y="677.27" width="28.04" height="4.91" fill="#6b2f3a"/><rect x="1123.45" y="677.27" width="35.05" height="4.91" fill="#edcdbf"/><rect x="1158.49" y="677.27" width="7.01" height="4.91" fill="#6b2f3a"/><rect x="1165.50" y="677.27" width="7.01" height="4.91" fill="#edcdbf"/><rect x="1172.51" y="677.27" width="7.01" height="4.91" fill="#6b2f3a"/><rect x="1179.52" y="677.27" width="28.04" height="4.91" fill="#edcdbf"/><rect x="1207.56" y="677.27" width="28.04" height="4.91" fill="#6b2f3a"/><rect x="1235.60" y="677.27" width="70.10" height="4.91" fill="#edcdbf"/><rect x="1305.70" y="677.27" width="7.01" height="4.91" fill="#686868"/><rect x="1312.71" y="677.27" width="7.01" height="4.91" fill="#edcdbf"/><rect x="1011.29" y="682.18" width="7.01" height="4.91" fill="#686868"/><rect x="1025.31" y="682.18" width="14.02" height="4.91" fill="#6b2f3a"/><rect x="1053.35" y="682.18" width="35.05" height="4.91" fill="#edcdbf"/><rect x="1088.40" y="682.18" width="7.01" height="4.91" fill="#6b2f3a"/><rect x="1095.41" y="682.18" width="7.01" height="4.91" fill="#edcdbf"/><rect x="1102.42" y="682.18" width="14.02" height="4.91" fill="#6b2f3a"/><rect x="1116.44" y="682.18" width="7.01" height="4.91" fill="#edcdbf"/><rect x="1123.45" y="682.18" width="7.01" height="4.91" fill="#6b2f3a"/><rect x="1130.46" y="682.18" width="28.04" height="4.91" fill="#edcdbf"/><rect x="1158.49" y="682.18" width="7.01" height="4.91" fill="#6b2f3a"/><rect x="1165.50" y="682.18" width="7.01" height="4.91" fill="#edcdbf"/><rect x="1172.51" y="682.18" width="7.01" height="4.91" fill="#6b2f3a"/><rect x="1179.52" y="682.18" width="21.03" height="4.91" fill="#edcdbf"/><rect x="1200.55" y="682.18" width="7.01" height="4.91" fill="#6b2f3a"/><rect x="1207.56" y="682.18" width="7.01" height="4.91" fill="#edcdbf"/><rect x="1214.57" y="682.18" width="14.02" height="4.91" fill="#6b2f3a"/><rect x="1228.59" y="682.18" width="7.01" height="4.91" fill="#edcdbf"/><rect x="1235.60" y="682.18" width="7.01" height="4.91" fill="#6b2f3a"/><rect x="1242.61" y="682.18" width="56.08" height="4.91" fill="#edcdbf"/><rect x="1298.69" y="682.18" width="7.01" height="4.91" fill="#6b2f3a"/><rect x="1305.70" y="682.18" width="7.01" height="4.91" fill="#edcdbf"/><rect x="1011.29" y="687.09" width="7.01" height="4.91" fill="#6b2f3a"/><rect x="1018.30" y="687.09" width="7.01" height="4.91" fill="#686868"/><rect x="1053.35" y="687.09" width="7.01" height="4.91" fill="#6b2f3a"/><rect x="1060.36" y="687.09" width="35.05" height="4.91" fill="#edcdbf"/><rect x="1095.41" y="687.09" width="7.01" height="4.91" fill="#6b2f3a"/><rect x="1102.42" y="687.09" width="14.02" height="4.91" fill="#edcdbf"/><rect x="1116.44" y="687.09" width="7.01" height="4.91" fill="#6b2f3a"/><rect x="1123.45" y="687.09" width="42.06" height="4.91" fill="#edcdbf"/><rect x="1165.50" y="687.09" width="7.01" height="4.91" fill="#6b2f3a"/><rect x="1172.51" y="687.09" width="35.05" height="4.91" fill="#edcdbf"/><rect x="1207.56" y="687.09" width="7.01" height="4.91" fill="#6b2f3a"/><rect x="1214.57" y="687.09" width="14.02" height="4.91" fill="#edcdbf"/><rect x="1228.59" y="687.09" width="7.01" height="4.91" fill="#6b2f3a"/><rect x="1235.60" y="687.09" width="42.06" height="4.91" fill="#edcdbf"/><rect x="1312.71" y="687.09" width="7.01" height="4.91" fill="#6b2f3a"/><rect x="1018.30" y="692.00" width="7.01" height="4.91" fill="#686868"/><rect x="1025.31" y="692.00" width="7.01" height="4.91" fill="#6b2f3a"/><rect x="1046.34" y="692.00" width="42.06" height="4.91" fill="#6b2f3a"/><rect x="1088.40" y="692.00" width="77.11" height="4.91" fill="#edcdbf"/><rect x="1165.50" y="692.00" width="7.01" height="4.91" fill="#6b2f3a"/><rect x="1172.51" y="692.00" width="77.11" height="4.91" fill="#edcdbf"/><rect x="1249.62" y="692.00" width="35.05" height="4.91" fill="#6b2f3a"/><rect x="1312.71" y="692.00" width="7.01" height="4.91" fill="#686868"/><rect x="1018.30" y="696.91" width="7.01" height="4.91" fill="#6b2f3a"/><rect x="1053.35" y="696.91" width="42.06" height="4.91" fill="#edcdbf"/><rect x="1095.41" y="696.91" width="7.01" height="4.91" fill="#6b2f3a"/><rect x="1102.42" y="696.91" width="63.09" height="4.91" fill="#edcdbf"/><rect x="1165.50" y="696.91" width="7.01" height="4.91" fill="#6b2f3a"/><rect x="1172.51" y="696.91" width="63.09" height="4.91" fill="#edcdbf"/><rect x="1235.60" y="696.91" width="7.01" height="4.91" fill="#686868"/><rect x="1242.61" y="696.91" width="42.06" height="4.91" fill="#edcdbf"/><rect x="1284.67" y="696.91" width="28.04" height="4.91" fill="#6b2f3a"/><rect x="1025.31" y="701.82" width="21.03" height="4.91" fill="#6b2f3a"/><rect x="1046.34" y="701.82" width="56.08" height="4.91" fill="#edcdbf"/><rect x="1102.42" y="701.82" width="7.01" height="4.91" fill="#686868"/><rect x="1109.43" y="701.82" width="35.05" height="4.91" fill="#edcdbf"/><rect x="1144.48" y="701.82" width="7.01" height="4.91" fill="#6b2f3a"/><rect x="1151.49" y="701.82" width="7.01" height="4.91" fill="#edcdbf"/><rect x="1158.49" y="701.82" width="7.01" height="4.91" fill="#686868"/><rect x="1165.50" y="701.82" width="21.03" height="4.91" fill="#edcdbf"/><rect x="1186.53" y="701.82" width="7.01" height="4.91" fill="#6b2f3a"/><rect x="1193.54" y="701.82" width="84.12" height="4.91" fill="#edcdbf"/><rect x="1291.68" y="701.82" width="14.02" height="4.91" fill="#6b2f3a"/><rect x="1368.79" y="701.82" width="7.01" height="4.91" fill="#edcdbf"/><rect x="1032.32" y="706.73" width="14.02" height="4.91" fill="#6b2f3a"/><rect x="1046.34" y="706.73" width="7.01" height="4.91" fill="#edcdbf"/><rect x="1053.35" y="706.73" width="14.02" height="4.91" fill="#6b2f3a"/><rect x="1067.37" y="706.73" width="154.22" height="4.91" fill="#edcdbf"/><rect x="1221.58" y="706.73" width="7.01" height="4.91" fill="#686868"/><rect x="1228.59" y="706.73" width="49.07" height="4.91" fill="#edcdbf"/><rect x="1277.66" y="706.73" width="28.04" height="4.91" fill="#6b2f3a"/><rect x="1032.32" y="711.64" width="21.03" height="4.91" fill="#6b2f3a"/><rect x="1053.35" y="711.64" width="42.06" height="4.91" fill="#edcdbf"/><rect x="1095.41" y="711.64" width="7.01" height="4.91" fill="#6b2f3a"/><rect x="1102.42" y="711.64" width="126.18" height="4.91" fill="#edcdbf"/><rect x="1228.59" y="711.64" width="14.02" height="4.91" fill="#6b2f3a"/><rect x="1242.61" y="711.64" width="35.05" height="4.91" fill="#edcdbf"/><rect x="1291.68" y="711.64" width="7.01" height="4.91" fill="#6b2f3a"/><rect x="1025.31" y="716.55" width="7.01" height="4.91" fill="#686868"/><rect x="1032.32" y="716.55" width="21.03" height="4.91" fill="#6b2f3a"/><rect x="1060.36" y="716.55" width="14.02" height="4.91" fill="#edcdbf"/><rect x="1074.38" y="716.55" width="7.01" height="4.91" fill="#6b2f3a"/><rect x="1081.39" y="716.55" width="7.01" height="4.91" fill="#686868"/><rect x="1088.40" y="716.55" width="161.23" height="4.91" fill="#edcdbf"/><rect x="1249.62" y="716.55" width="7.01" height="4.91" fill="#6b2f3a"/><rect x="1256.63" y="716.55" width="7.01" height="4.91" fill="#edcdbf"/><rect x="1277.66" y="716.55" width="7.01" height="4.91" fill="#6b2f3a"/><rect x="1291.68" y="716.55" width="7.01" height="4.91" fill="#6b2f3a"/><rect x="1305.70" y="716.55" width="7.01" height="4.91" fill="#6b2f3a"/><rect x="1018.30" y="721.45" width="7.01" height="4.91" fill="#6b2f3a"/><rect x="1032.32" y="721.45" width="35.05" height="4.91" fill="#6b2f3a"/><rect x="1067.37" y="721.45" width="7.01" height="4.91" fill="#686868"/><rect x="1074.38" y="721.45" width="189.27" height="4.91" fill="#edcdbf"/><rect x="1263.64" y="721.45" width="7.01" height="4.91" fill="#6b2f3a"/><rect x="1284.67" y="721.45" width="7.01" height="4.91" fill="#686868"/><rect x="1291.68" y="721.45" width="7.01" height="4.91" fill="#6b2f3a"/><rect x="1011.29" y="726.36" width="7.01" height="4.91" fill="#686868"/><rect x="1039.33" y="726.36" width="28.04" height="4.91" fill="#6b2f3a"/><rect x="1067.37" y="726.36" width="196.28" height="4.91" fill="#edcdbf"/><rect x="1270.65" y="726.36" width="7.01" height="4.91" fill="#6b2f3a"/><rect x="1284.67" y="726.36" width="7.01" height="4.91" fill="#6b2f3a"/><rect x="1046.34" y="731.27" width="28.04" height="4.91" fill="#6b2f3a"/><rect x="1074.38" y="731.27" width="182.26" height="4.91" fill="#edcdbf"/><rect x="1277.66" y="731.27" width="7.01" height="4.91" fill="#6b2f3a"/><rect x="1298.69" y="731.27" width="7.01" height="4.91" fill="#686868"/><rect x="1039.33" y="736.18" width="35.05" height="4.91" fill="#6b2f3a"/><rect x="1074.38" y="736.18" width="175.25" height="4.91" fill="#edcdbf"/><rect x="1277.66" y="736.18" width="7.01" height="4.91" fill="#6b2f3a"/><rect x="1284.67" y="736.18" width="7.01" height="4.91" fill="#686868"/><rect x="1032.32" y="741.09" width="7.01" height="4.91" fill="#6b2f3a"/><rect x="1053.35" y="741.09" width="21.03" height="4.91" fill="#6b2f3a"/><rect x="1074.38" y="741.09" width="175.25" height="4.91" fill="#edcdbf"/><rect x="1249.62" y="741.09" width="7.01" height="4.91" fill="#6b2f3a"/><rect x="1270.65" y="741.09" width="7.01" height="4.91" fill="#6b2f3a"/><rect x="1305.70" y="741.09" width="7.01" height="4.91" fill="#686868"/><rect x="1340.75" y="741.09" width="14.02" height="4.91" fill="#6b2f3a"/><rect x="1354.77" y="741.09" width="14.02" height="4.91" fill="#edcdbf"/><rect x="1368.79" y="741.09" width="14.02" height="4.91" fill="#686868"/><rect x="1060.36" y="746.00" width="14.02" height="4.91" fill="#6b2f3a"/><rect x="1074.38" y="746.00" width="189.27" height="4.91" fill="#edcdbf"/><rect x="1263.64" y="746.00" width="7.01" height="4.91" fill="#686868"/><rect x="1291.68" y="746.00" width="7.01" height="4.91" fill="#686868"/><rect x="1333.74" y="746.00" width="7.01" height="4.91" fill="#6b2f3a"/><rect x="1340.75" y="746.00" width="35.05" height="4.91" fill="#edcdbf"/><rect x="1375.80" y="746.00" width="7.01" height="4.91" fill="#6b2f3a"/><rect x="1074.38" y="750.91" width="7.01" height="4.91" fill="#6b2f3a"/><rect x="1081.39" y="750.91" width="168.24" height="4.91" fill="#edcdbf"/><rect x="1249.62" y="750.91" width="7.01" height="4.91" fill="#6b2f3a"/><rect x="1326.73" y="750.91" width="7.01" height="4.91" fill="#6b2f3a"/><rect x="1333.74" y="750.91" width="42.06" height="4.91" fill="#edcdbf"/><rect x="1375.80" y="750.91" width="7.01" height="4.91" fill="#6b2f3a"/><rect x="1081.39" y="755.82" width="14.02" height="4.91" fill="#6b2f3a"/><rect x="1095.41" y="755.82" width="140.20" height="4.91" fill="#edcdbf"/><rect x="1235.60" y="755.82" width="14.02" height="4.91" fill="#6b2f3a"/><rect x="1319.72" y="755.82" width="7.01" height="4.91" fill="#6b2f3a"/><rect x="1326.73" y="755.82" width="42.06" height="4.91" fill="#edcdbf"/><rect x="1368.79" y="755.82" width="7.01" height="4.91" fill="#686868"/><rect x="1081.39" y="760.73" width="7.01" height="4.91" fill="#edcdbf"/><rect x="1088.40" y="760.73" width="7.01" height="4.91" fill="#6b2f3a"/><rect x="1095.41" y="760.73" width="7.01" height="4.91" fill="#686868"/><rect x="1102.42" y="760.73" width="21.03" height="4.91" fill="#6b2f3a"/><rect x="1123.45" y="760.73" width="77.11" height="4.91" fill="#edcdbf"/><rect x="1200.55" y="760.73" width="28.04" height="4.91" fill="#6b2f3a"/><rect x="1228.59" y="760.73" width="14.02" height="4.91" fill="#686868"/><rect x="1242.61" y="760.73" width="7.01" height="4.91" fill="#edcdbf"/><rect x="1298.69" y="760.73" width="7.01" height="4.91" fill="#686868"/><rect x="1312.71" y="760.73" width="21.03" height="4.91" fill="#6b2f3a"/><rect x="1333.74" y="760.73" width="7.01" height="4.91" fill="#686868"/><rect x="1340.75" y="760.73" width="28.04" height="4.91" fill="#edcdbf"/><rect x="1368.79" y="760.73" width="7.01" height="4.91" fill="#686868"/><rect x="1074.38" y="765.64" width="7.01" height="4.91" fill="#6b2f3a"/><rect x="1081.39" y="765.64" width="14.02" height="4.91" fill="#edcdbf"/><rect x="1095.41" y="765.64" width="35.05" height="4.91" fill="#686868"/><rect x="1130.46" y="765.64" width="28.04" height="4.91" fill="#6b2f3a"/><rect x="1158.49" y="765.64" width="14.02" height="4.91" fill="#edcdbf"/><rect x="1172.51" y="765.64" width="56.08" height="4.91" fill="#686868"/><rect x="1228.59" y="765.64" width="7.01" height="4.91" fill="#6b2f3a"/><rect x="1235.60" y="765.64" width="14.02" height="4.91" fill="#edcdbf"/><rect x="1249.62" y="765.64" width="7.01" height="4.91" fill="#6b2f3a"/><rect x="1305.70" y="765.64" width="42.06" height="4.91" fill="#6b2f3a"/><rect x="1347.76" y="765.64" width="14.02" height="4.91" fill="#edcdbf"/><rect x="1361.78" y="765.64" width="7.01" height="4.91" fill="#6b2f3a"/><rect x="1011.29" y="770.55" width="7.01" height="4.91" fill="#6b2f3a"/><rect x="1074.38" y="770.55" width="7.01" height="4.91" fill="#686868"/><rect x="1081.39" y="770.55" width="14.02" height="4.91" fill="#edcdbf"/><rect x="1095.41" y="770.55" width="7.01" height="4.91" fill="#6b2f3a"/><rect x="1102.42" y="770.55" width="14.02" height="4.91" fill="#686868"/><rect x="1123.45" y="770.55" width="21.03" height="4.91" fill="#686868"/><rect x="1144.48" y="770.55" width="7.01" height="4.91" fill="#6b2f3a"/><rect x="1151.49" y="770.55" width="28.04" height="4.91" fill="#686868"/><rect x="1179.52" y="770.55" width="7.01" height="4.91" fill="#6b2f3a"/><rect x="1207.56" y="770.55" width="7.01" height="4.91" fill="#686868"/><rect x="1214.57" y="770.55" width="7.01" height="4.91" fill="#6b2f3a"/><rect x="1221.58" y="770.55" width="7.01" height="4.91" fill="#686868"/><rect x="1228.59" y="770.55" width="21.03" height="4.91" fill="#edcdbf"/><rect x="1249.62" y="770.55" width="7.01" height="4.91" fill="#6b2f3a"/><rect x="1305.70" y="770.55" width="56.08" height="4.91" fill="#6b2f3a"/><rect x="1074.38" y="775.45" width="28.04" height="4.91" fill="#edcdbf"/><rect x="1102.42" y="775.45" width="7.01" height="4.91" fill="#686868"/><rect x="1109.43" y="775.45" width="7.01" height="4.91" fill="#6b2f3a"/><rect x="1116.44" y="775.45" width="28.04" height="4.91" fill="#686868"/><rect x="1144.48" y="775.45" width="7.01" height="4.91" fill="#6b2f3a"/><rect x="1151.49" y="775.45" width="7.01" height="4.91" fill="#686868"/><rect x="1179.52" y="775.45" width="7.01" height="4.91" fill="#6b2f3a"/><rect x="1200.55" y="775.45" width="7.01" height="4.91" fill="#6b2f3a"/><rect x="1207.56" y="775.45" width="56.08" height="4.91" fill="#edcdbf"/><rect x="1298.69" y="775.45" width="63.09" height="4.91" fill="#6b2f3a"/><rect x="1074.38" y="780.36" width="49.07" height="4.91" fill="#edcdbf"/><rect x="1123.45" y="780.36" width="28.04" height="4.91" fill="#6b2f3a"/><rect x="1151.49" y="780.36" width="7.01" height="4.91" fill="#686868"/><rect x="1179.52" y="780.36" width="7.01" height="4.91" fill="#6b2f3a"/><rect x="1193.54" y="780.36" width="7.01" height="4.91" fill="#6b2f3a"/><rect x="1200.55" y="780.36" width="56.08" height="4.91" fill="#edcdbf"/><rect x="1256.63" y="780.36" width="7.01" height="4.91" fill="#686868"/><rect x="1298.69" y="780.36" width="7.01" height="4.91" fill="#6b2f3a"/><rect x="1305.70" y="780.36" width="7.01" height="4.91" fill="#edcdbf"/><rect x="1312.71" y="780.36" width="21.03" height="4.91" fill="#6b2f3a"/><rect x="1347.76" y="780.36" width="7.01" height="4.91" fill="#6b2f3a"/><rect x="1067.37" y="785.27" width="7.01" height="4.91" fill="#6b2f3a"/><rect x="1074.38" y="785.27" width="70.10" height="4.91" fill="#edcdbf"/><rect x="1144.48" y="785.27" width="7.01" height="4.91" fill="#6b2f3a"/><rect x="1179.52" y="785.27" width="7.01" height="4.91" fill="#edcdbf"/><rect x="1186.53" y="785.27" width="7.01" height="4.91" fill="#6b2f3a"/><rect x="1193.54" y="785.27" width="63.09" height="4.91" fill="#edcdbf"/><rect x="1256.63" y="785.27" width="7.01" height="4.91" fill="#6b2f3a"/><rect x="1298.69" y="785.27" width="7.01" height="4.91" fill="#6b2f3a"/><rect x="1305.70" y="785.27" width="35.05" height="4.91" fill="#edcdbf"/><rect x="1340.75" y="785.27" width="7.01" height="4.91" fill="#6b2f3a"/><rect x="1067.37" y="790.18" width="7.01" height="4.91" fill="#6b2f3a"/><rect x="1074.38" y="790.18" width="77.11" height="4.91" fill="#edcdbf"/><rect x="1151.49" y="790.18" width="7.01" height="4.91" fill="#6b2f3a"/><rect x="1172.51" y="790.18" width="7.01" height="4.91" fill="#6b2f3a"/><rect x="1179.52" y="790.18" width="77.11" height="4.91" fill="#edcdbf"/><rect x="1256.63" y="790.18" width="7.01" height="4.91" fill="#6b2f3a"/><rect x="1298.69" y="790.18" width="14.02" height="4.91" fill="#6b2f3a"/><rect x="1312.71" y="790.18" width="28.04" height="4.91" fill="#edcdbf"/><rect x="1340.75" y="790.18" width="7.01" height="4.91" fill="#6b2f3a"/><rect x="1067.37" y="795.09" width="7.01" height="4.91" fill="#6b2f3a"/><rect x="1074.38" y="795.09" width="77.11" height="4.91" fill="#edcdbf"/><rect x="1151.49" y="795.09" width="7.01" height="4.91" fill="#686868"/><rect x="1158.49" y="795.09" width="7.01" height="4.91" fill="#6b2f3a"/><rect x="1165.50" y="795.09" width="14.02" height="4.91" fill="#686868"/><rect x="1179.52" y="795.09" width="84.12" height="4.91" fill="#edcdbf"/><rect x="1263.64" y="795.09" width="7.01" height="4.91" fill="#686868"/><rect x="1291.68" y="795.09" width="56.08" height="4.91" fill="#6b2f3a"/><rect x="1032.32" y="800.00" width="7.01" height="4.91" fill="#edcdbf"/><rect x="1067.37" y="800.00" width="7.01" height="4.91" fill="#6b2f3a"/><rect x="1074.38" y="800.00" width="70.10" height="4.91" fill="#edcdbf"/><rect x="1144.48" y="800.00" width="7.01" height="4.91" fill="#6b2f3a"/><rect x="1179.52" y="800.00" width="91.13" height="4.91" fill="#edcdbf"/><rect x="1270.65" y="800.00" width="7.01" height="4.91" fill="#6b2f3a"/><rect x="1291.68" y="800.00" width="49.07" height="4.91" fill="#6b2f3a"/><rect x="1067.37" y="804.91" width="7.01" height="4.91" fill="#6b2f3a"/><rect x="1074.38" y="804.91" width="70.10" height="4.91" fill="#edcdbf"/><rect x="1144.48" y="804.91" width="7.01" height="4.91" fill="#6b2f3a"/><rect x="1179.52" y="804.91" width="98.14" height="4.91" fill="#edcdbf"/><rect x="1277.66" y="804.91" width="7.01" height="4.91" fill="#6b2f3a"/><rect x="1291.68" y="804.91" width="49.07" height="4.91" fill="#6b2f3a"/><rect x="1067.37" y="809.82" width="7.01" height="4.91" fill="#6b2f3a"/><rect x="1074.38" y="809.82" width="77.11" height="4.91" fill="#edcdbf"/><rect x="1172.51" y="809.82" width="7.01" height="4.91" fill="#6b2f3a"/><rect x="1179.52" y="809.82" width="84.12" height="4.91" fill="#edcdbf"/><rect x="1263.64" y="809.82" width="7.01" height="4.91" fill="#686868"/><rect x="1270.65" y="809.82" width="7.01" height="4.91" fill="#edcdbf"/><rect x="1277.66" y="809.82" width="7.01" height="4.91" fill="#686868"/><rect x="1291.68" y="809.82" width="7.01" height="4.91" fill="#edcdbf"/><rect x="1298.69" y="809.82" width="42.06" height="4.91" fill="#6b2f3a"/><rect x="1060.36" y="814.73" width="14.02" height="4.91" fill="#6b2f3a"/><rect x="1074.38" y="814.73" width="77.11" height="4.91" fill="#edcdbf"/><rect x="1151.49" y="814.73" width="7.01" height="4.91" fill="#686868"/><rect x="1158.49" y="814.73" width="14.02" height="4.91" fill="#6b2f3a"/><rect x="1172.51" y="814.73" width="91.13" height="4.91" fill="#edcdbf"/><rect x="1270.65" y="814.73" width="49.07" height="4.91" fill="#edcdbf"/><rect x="1319.72" y="814.73" width="28.04" height="4.91" fill="#6b2f3a"/><rect x="1060.36" y="819.64" width="14.02" height="4.91" fill="#6b2f3a"/><rect x="1074.38" y="819.64" width="161.23" height="4.91" fill="#edcdbf"/><rect x="1235.60" y="819.64" width="7.01" height="4.91" fill="#6b2f3a"/><rect x="1242.61" y="819.64" width="21.03" height="4.91" fill="#edcdbf"/><rect x="1263.64" y="819.64" width="7.01" height="4.91" fill="#6b2f3a"/><rect x="1277.66" y="819.64" width="7.01" height="4.91" fill="#edcdbf"/><rect x="1284.67" y="819.64" width="7.01" height="4.91" fill="#6b2f3a"/><rect x="1291.68" y="819.64" width="42.06" height="4.91" fill="#edcdbf"/><rect x="1333.74" y="819.64" width="7.01" height="4.91" fill="#6b2f3a"/><rect x="1067.37" y="824.55" width="7.01" height="4.91" fill="#6b2f3a"/><rect x="1074.38" y="824.55" width="161.23" height="4.91" fill="#edcdbf"/><rect x="1235.60" y="824.55" width="7.01" height="4.91" fill="#6b2f3a"/><rect x="1242.61" y="824.55" width="21.03" height="4.91" fill="#edcdbf"/><rect x="1263.64" y="824.55" width="7.01" height="4.91" fill="#6b2f3a"/><rect x="1277.66" y="824.55" width="7.01" height="4.91" fill="#edcdbf"/><rect x="1284.67" y="824.55" width="7.01" height="4.91" fill="#686868"/><rect x="1291.68" y="824.55" width="7.01" height="4.91" fill="#6b2f3a"/><rect x="1298.69" y="824.55" width="35.05" height="4.91" fill="#edcdbf"/><rect x="1333.74" y="824.55" width="7.01" height="4.91" fill="#686868"/><rect x="1053.35" y="829.45" width="7.01" height="4.91" fill="#6b2f3a"/><rect x="1067.37" y="829.45" width="7.01" height="4.91" fill="#6b2f3a"/><rect x="1074.38" y="829.45" width="161.23" height="4.91" fill="#edcdbf"/><rect x="1235.60" y="829.45" width="7.01" height="4.91" fill="#6b2f3a"/><rect x="1242.61" y="829.45" width="21.03" height="4.91" fill="#edcdbf"/><rect x="1263.64" y="829.45" width="7.01" height="4.91" fill="#6b2f3a"/><rect x="1277.66" y="829.45" width="14.02" height="4.91" fill="#edcdbf"/><rect x="1291.68" y="829.45" width="14.02" height="4.91" fill="#6b2f3a"/><rect x="1305.70" y="829.45" width="28.04" height="4.91" fill="#edcdbf"/><rect x="1053.35" y="834.36" width="7.01" height="4.91" fill="#6b2f3a"/><rect x="1067.37" y="834.36" width="7.01" height="4.91" fill="#6b2f3a"/><rect x="1074.38" y="834.36" width="161.23" height="4.91" fill="#edcdbf"/><rect x="1235.60" y="834.36" width="7.01" height="4.91" fill="#6b2f3a"/><rect x="1242.61" y="834.36" width="21.03" height="4.91" fill="#edcdbf"/><rect x="1263.64" y="834.36" width="7.01" height="4.91" fill="#6b2f3a"/><rect x="1277.66" y="834.36" width="14.02" height="4.91" fill="#edcdbf"/><rect x="1291.68" y="834.36" width="42.06" height="4.91" fill="#6b2f3a"/><rect x="1053.35" y="839.27" width="7.01" height="4.91" fill="#6b2f3a"/><rect x="1067.37" y="839.27" width="7.01" height="4.91" fill="#686868"/><rect x="1074.38" y="839.27" width="161.23" height="4.91" fill="#edcdbf"/><rect x="1235.60" y="839.27" width="7.01" height="4.91" fill="#6b2f3a"/><rect x="1242.61" y="839.27" width="21.03" height="4.91" fill="#edcdbf"/><rect x="1263.64" y="839.27" width="7.01" height="4.91" fill="#686868"/><rect x="1270.65" y="839.27" width="21.03" height="4.91" fill="#edcdbf"/><rect x="1291.68" y="839.27" width="7.01" height="4.91" fill="#686868"/><rect x="1298.69" y="839.27" width="14.02" height="4.91" fill="#edcdbf"/><rect x="1312.71" y="839.27" width="21.03" height="4.91" fill="#6b2f3a"/><rect x="1053.35" y="844.18" width="14.02" height="4.91" fill="#edcdbf"/><rect x="1074.38" y="844.18" width="49.07" height="4.91" fill="#edcdbf"/><rect x="1130.46" y="844.18" width="7.01" height="4.91" fill="#edcdbf"/><rect x="1144.48" y="844.18" width="42.06" height="4.91" fill="#edcdbf"/><rect x="1193.54" y="844.18" width="42.06" height="4.91" fill="#edcdbf"/><rect x="1235.60" y="844.18" width="7.01" height="4.91" fill="#6b2f3a"/><rect x="1242.61" y="844.18" width="49.07" height="4.91" fill="#edcdbf"/><rect x="1291.68" y="844.18" width="7.01" height="4.91" fill="#686868"/><rect x="1298.69" y="844.18" width="28.04" height="4.91" fill="#edcdbf"/><rect x="1326.73" y="844.18" width="7.01" height="4.91" fill="#6b2f3a"/><rect x="1053.35" y="849.09" width="70.10" height="4.91" fill="#edcdbf"/><rect x="1130.46" y="849.09" width="105.15" height="4.91" fill="#edcdbf"/><rect x="1235.60" y="849.09" width="7.01" height="4.91" fill="#6b2f3a"/><rect x="1242.61" y="849.09" width="84.12" height="4.91" fill="#edcdbf"/><rect x="1326.73" y="849.09" width="7.01" height="4.91" fill="#6b2f3a"/><rect x="1053.35" y="854.00" width="21.03" height="4.91" fill="#edcdbf"/><rect x="1074.38" y="854.00" width="7.01" height="4.91" fill="#6b2f3a"/><rect x="1081.39" y="854.00" width="49.07" height="4.91" fill="#edcdbf"/><rect x="1137.47" y="854.00" width="98.14" height="4.91" fill="#edcdbf"/><rect x="1235.60" y="854.00" width="7.01" height="4.91" fill="#686868"/><rect x="1242.61" y="854.00" width="84.12" height="4.91" fill="#edcdbf"/><rect x="1326.73" y="854.00" width="7.01" height="4.91" fill="#6b2f3a"/><rect x="1053.35" y="858.91" width="21.03" height="4.91" fill="#edcdbf"/><rect x="1074.38" y="858.91" width="7.01" height="4.91" fill="#6b2f3a"/><rect x="1081.39" y="858.91" width="49.07" height="4.91" fill="#edcdbf"/><rect x="1130.46" y="858.91" width="7.01" height="4.91" fill="#686868"/><rect x="1137.47" y="858.91" width="119.17" height="4.91" fill="#edcdbf"/><rect x="1256.63" y="858.91" width="7.01" height="4.91" fill="#686868"/><rect x="1263.64" y="858.91" width="28.04" height="4.91" fill="#edcdbf"/><rect x="1298.69" y="858.91" width="28.04" height="4.91" fill="#edcdbf"/><rect x="1053.35" y="863.82" width="77.11" height="4.91" fill="#edcdbf"/><rect x="1130.46" y="863.82" width="7.01" height="4.91" fill="#6b2f3a"/><rect x="1137.47" y="863.82" width="119.17" height="4.91" fill="#edcdbf"/><rect x="1256.63" y="863.82" width="7.01" height="4.91" fill="#6b2f3a"/><rect x="1263.64" y="863.82" width="21.03" height="4.91" fill="#edcdbf"/><rect x="1284.67" y="863.82" width="7.01" height="4.91" fill="#6b2f3a"/><rect x="1305.70" y="863.82" width="14.02" height="4.91" fill="#edcdbf"/><rect x="1319.72" y="863.82" width="7.01" height="4.91" fill="#686868"/><rect x="1053.35" y="868.73" width="7.01" height="4.91" fill="#686868"/><rect x="1060.36" y="868.73" width="70.10" height="4.91" fill="#edcdbf"/><rect x="1130.46" y="868.73" width="7.01" height="4.91" fill="#6b2f3a"/><rect x="1137.47" y="868.73" width="42.06" height="4.91" fill="#edcdbf"/><rect x="1179.52" y="868.73" width="7.01" height="4.91" fill="#6b2f3a"/><rect x="1186.53" y="868.73" width="98.14" height="4.91" fill="#edcdbf"/><rect x="1284.67" y="868.73" width="7.01" height="4.91" fill="#6b2f3a"/><rect x="1319.72" y="868.73" width="7.01" height="4.91" fill="#6b2f3a"/><rect x="1053.35" y="873.64" width="7.01" height="4.91" fill="#6b2f3a"/><rect x="1060.36" y="873.64" width="21.03" height="4.91" fill="#edcdbf"/><rect x="1081.39" y="873.64" width="7.01" height="4.91" fill="#6b2f3a"/><rect x="1088.40" y="873.64" width="42.06" height="4.91" fill="#edcdbf"/><rect x="1130.46" y="873.64" width="7.01" height="4.91" fill="#686868"/><rect x="1137.47" y="873.64" width="42.06" height="4.91" fill="#edcdbf"/><rect x="1179.52" y="873.64" width="7.01" height="4.91" fill="#6b2f3a"/><rect x="1186.53" y="873.64" width="42.06" height="4.91" fill="#edcdbf"/><rect x="1228.59" y="873.64" width="7.01" height="4.91" fill="#686868"/><rect x="1235.60" y="873.64" width="49.07" height="4.91" fill="#edcdbf"/><rect x="1284.67" y="873.64" width="14.02" height="4.91" fill="#6b2f3a"/><rect x="1053.35" y="878.55" width="7.01" height="4.91" fill="#686868"/><rect x="1060.36" y="878.55" width="21.03" height="4.91" fill="#edcdbf"/><rect x="1081.39" y="878.55" width="7.01" height="4.91" fill="#6b2f3a"/><rect x="1088.40" y="878.55" width="91.13" height="4.91" fill="#edcdbf"/><rect x="1179.52" y="878.55" width="7.01" height="4.91" fill="#6b2f3a"/><rect x="1186.53" y="878.55" width="42.06" height="4.91" fill="#edcdbf"/><rect x="1228.59" y="878.55" width="7.01" height="4.91" fill="#6b2f3a"/><rect x="1235.60" y="878.55" width="14.02" height="4.91" fill="#edcdbf"/><rect x="1249.62" y="878.55" width="7.01" height="4.91" fill="#6b2f3a"/><rect x="1256.63" y="878.55" width="21.03" height="4.91" fill="#edcdbf"/><rect x="1277.66" y="878.55" width="28.04" height="4.91" fill="#6b2f3a"/><rect x="1312.71" y="878.55" width="7.01" height="4.91" fill="#6b2f3a"/><rect x="1060.36" y="883.45" width="119.17" height="4.91" fill="#edcdbf"/><rect x="1179.52" y="883.45" width="7.01" height="4.91" fill="#6b2f3a"/><rect x="1186.53" y="883.45" width="42.06" height="4.91" fill="#edcdbf"/><rect x="1228.59" y="883.45" width="7.01" height="4.91" fill="#6b2f3a"/><rect x="1235.60" y="883.45" width="42.06" height="4.91" fill="#edcdbf"/><rect x="1277.66" y="883.45" width="7.01" height="4.91" fill="#686868"/><rect x="1284.67" y="883.45" width="28.04" height="4.91" fill="#6b2f3a"/><rect x="1060.36" y="888.36" width="7.01" height="4.91" fill="#6b2f3a"/><rect x="1067.37" y="888.36" width="21.03" height="4.91" fill="#edcdbf"/><rect x="1088.40" y="888.36" width="7.01" height="4.91" fill="#686868"/><rect x="1095.41" y="888.36" width="133.19" height="4.91" fill="#edcdbf"/><rect x="1228.59" y="888.36" width="7.01" height="4.91" fill="#686868"/><rect x="1235.60" y="888.36" width="7.01" height="4.91" fill="#edcdbf"/><rect x="1242.61" y="888.36" width="7.01" height="4.91" fill="#6b2f3a"/><rect x="1249.62" y="888.36" width="21.03" height="4.91" fill="#edcdbf"/><rect x="1270.65" y="888.36" width="7.01" height="4.91" fill="#6b2f3a"/><rect x="1277.66" y="888.36" width="7.01" height="4.91" fill="#edcdbf"/><rect x="1284.67" y="888.36" width="21.03" height="4.91" fill="#6b2f3a"/><rect x="1060.36" y="893.27" width="7.01" height="4.91" fill="#edcdbf"/><rect x="1067.37" y="893.27" width="7.01" height="4.91" fill="#686868"/><rect x="1074.38" y="893.27" width="14.02" height="4.91" fill="#edcdbf"/><rect x="1088.40" y="893.27" width="7.01" height="4.91" fill="#6b2f3a"/><rect x="1095.41" y="893.27" width="126.18" height="4.91" fill="#edcdbf"/><rect x="1228.59" y="893.27" width="7.01" height="4.91" fill="#edcdbf"/><rect x="1235.60" y="893.27" width="7.01" height="4.91" fill="#6b2f3a"/><rect x="1242.61" y="893.27" width="21.03" height="4.91" fill="#edcdbf"/><rect x="1263.64" y="893.27" width="7.01" height="4.91" fill="#6b2f3a"/><rect x="1270.65" y="893.27" width="14.02" height="4.91" fill="#edcdbf"/><rect x="1284.67" y="893.27" width="14.02" height="4.91" fill="#6b2f3a"/><rect x="1074.38" y="898.18" width="14.02" height="4.91" fill="#edcdbf"/><rect x="1088.40" y="898.18" width="7.01" height="4.91" fill="#686868"/><rect x="1095.41" y="898.18" width="42.06" height="4.91" fill="#edcdbf"/><rect x="1137.47" y="898.18" width="7.01" height="4.91" fill="#6b2f3a"/><rect x="1144.48" y="898.18" width="84.12" height="4.91" fill="#edcdbf"/><rect x="1228.59" y="898.18" width="21.03" height="4.91" fill="#6b2f3a"/><rect x="1249.62" y="898.18" width="7.01" height="4.91" fill="#edcdbf"/><rect x="1256.63" y="898.18" width="7.01" height="4.91" fill="#6b2f3a"/><rect x="1263.64" y="898.18" width="21.03" height="4.91" fill="#edcdbf"/><rect x="1284.67" y="898.18" width="7.01" height="4.91" fill="#6b2f3a"/><rect x="1060.36" y="903.09" width="21.03" height="4.91" fill="#6b2f3a"/><rect x="1081.39" y="903.09" width="56.08" height="4.91" fill="#edcdbf"/><rect x="1137.47" y="903.09" width="7.01" height="4.91" fill="#6b2f3a"/><rect x="1144.48" y="903.09" width="56.08" height="4.91" fill="#edcdbf"/><rect x="1207.56" y="903.09" width="14.02" height="4.91" fill="#edcdbf"/><rect x="1221.58" y="903.09" width="7.01" height="4.91" fill="#686868"/><rect x="1228.59" y="903.09" width="28.04" height="4.91" fill="#edcdbf"/><rect x="1256.63" y="903.09" width="7.01" height="4.91" fill="#6b2f3a"/><rect x="1263.64" y="903.09" width="21.03" height="4.91" fill="#edcdbf"/><rect x="1284.67" y="903.09" width="7.01" height="4.91" fill="#6b2f3a"/><rect x="1032.32" y="908.00" width="28.04" height="4.91" fill="#686868"/><rect x="1060.36" y="908.00" width="21.03" height="4.91" fill="#edcdbf"/><rect x="1081.39" y="908.00" width="7.01" height="4.91" fill="#6b2f3a"/><rect x="1088.40" y="908.00" width="49.07" height="4.91" fill="#edcdbf"/><rect x="1137.47" y="908.00" width="7.01" height="4.91" fill="#6b2f3a"/><rect x="1144.48" y="908.00" width="119.17" height="4.91" fill="#edcdbf"/><rect x="1263.64" y="908.00" width="14.02" height="4.91" fill="#6b2f3a"/><rect x="1277.66" y="908.00" width="7.01" height="4.91" fill="#686868"/><rect x="1004.28" y="912.91" width="49.07" height="4.91" fill="#686868"/><rect x="1053.35" y="912.91" width="84.12" height="4.91" fill="#edcdbf"/><rect x="1137.47" y="912.91" width="7.01" height="4.91" fill="#6b2f3a"/><rect x="1144.48" y="912.91" width="126.18" height="4.91" fill="#edcdbf"/><rect x="1270.65" y="912.91" width="14.02" height="4.91" fill="#686868"/><rect x="997.27" y="917.82" width="49.07" height="4.91" fill="#686868"/><rect x="1046.34" y="917.82" width="7.01" height="4.91" fill="#6b2f3a"/><rect x="1053.35" y="917.82" width="7.01" height="4.91" fill="#686868"/><rect x="1060.36" y="917.82" width="35.05" height="4.91" fill="#edcdbf"/><rect x="1095.41" y="917.82" width="7.01" height="4.91" fill="#686868"/><rect x="1102.42" y="917.82" width="35.05" height="4.91" fill="#edcdbf"/><rect x="1137.47" y="917.82" width="7.01" height="4.91" fill="#686868"/><rect x="1144.48" y="917.82" width="126.18" height="4.91" fill="#edcdbf"/><rect x="1270.65" y="917.82" width="35.05" height="4.91" fill="#686868"/><rect x="1340.75" y="917.82" width="14.02" height="4.91" fill="#edcdbf"/><rect x="997.27" y="922.73" width="49.07" height="4.91" fill="#686868"/><rect x="1046.34" y="922.73" width="14.02" height="4.91" fill="#6b2f3a"/><rect x="1060.36" y="922.73" width="35.05" height="4.91" fill="#edcdbf"/><rect x="1095.41" y="922.73" width="7.01" height="4.91" fill="#6b2f3a"/><rect x="1102.42" y="922.73" width="7.01" height="4.91" fill="#686868"/><rect x="1109.43" y="922.73" width="7.01" height="4.91" fill="#edcdbf"/><rect x="1116.44" y="922.73" width="7.01" height="4.91" fill="#686868"/><rect x="1123.45" y="922.73" width="14.02" height="4.91" fill="#edcdbf"/><rect x="1137.47" y="922.73" width="7.01" height="4.91" fill="#6b2f3a"/><rect x="1144.48" y="922.73" width="35.05" height="4.91" fill="#edcdbf"/><rect x="1186.53" y="922.73" width="84.12" height="4.91" fill="#edcdbf"/><rect x="1270.65" y="922.73" width="42.06" height="4.91" fill="#686868"/><rect x="1347.76" y="922.73" width="7.01" height="4.91" fill="#edcdbf"/><rect x="1011.29" y="927.64" width="42.06" height="4.91" fill="#686868"/><rect x="1053.35" y="927.64" width="7.01" height="4.91" fill="#6b2f3a"/><rect x="1060.36" y="927.64" width="35.05" height="4.91" fill="#edcdbf"/><rect x="1095.41" y="927.64" width="14.02" height="4.91" fill="#6b2f3a"/><rect x="1109.43" y="927.64" width="28.04" height="4.91" fill="#edcdbf"/><rect x="1137.47" y="927.64" width="42.06" height="4.91" fill="#6b2f3a"/><rect x="1179.52" y="927.64" width="7.01" height="4.91" fill="#686868"/><rect x="1193.54" y="927.64" width="28.04" height="4.91" fill="#edcdbf"/><rect x="1221.58" y="927.64" width="7.01" height="4.91" fill="#6b2f3a"/><rect x="1228.59" y="927.64" width="35.05" height="4.91" fill="#edcdbf"/><rect x="1263.64" y="927.64" width="7.01" height="4.91" fill="#6b2f3a"/><rect x="1270.65" y="927.64" width="42.06" height="4.91" fill="#686868"/><rect x="1025.31" y="932.55" width="28.04" height="4.91" fill="#686868"/><rect x="1053.35" y="932.55" width="7.01" height="4.91" fill="#6b2f3a"/><rect x="1060.36" y="932.55" width="35.05" height="4.91" fill="#edcdbf"/><rect x="1095.41" y="932.55" width="7.01" height="4.91" fill="#686868"/><rect x="1102.42" y="932.55" width="7.01" height="4.91" fill="#6b2f3a"/><rect x="1116.44" y="932.55" width="7.01" height="4.91" fill="#686868"/><rect x="1123.45" y="932.55" width="14.02" height="4.91" fill="#edcdbf"/><rect x="1137.47" y="932.55" width="42.06" height="4.91" fill="#686868"/><rect x="1179.52" y="932.55" width="7.01" height="4.91" fill="#6b2f3a"/><rect x="1207.56" y="932.55" width="7.01" height="4.91" fill="#edcdbf"/><rect x="1214.57" y="932.55" width="14.02" height="4.91" fill="#6b2f3a"/><rect x="1228.59" y="932.55" width="28.04" height="4.91" fill="#edcdbf"/><rect x="1256.63" y="932.55" width="7.01" height="4.91" fill="#6b2f3a"/><rect x="1263.64" y="932.55" width="35.05" height="4.91" fill="#686868"/><rect x="1060.36" y="937.45" width="7.01" height="4.91" fill="#686868"/><rect x="1067.37" y="937.45" width="21.03" height="4.91" fill="#6b2f3a"/><rect x="1088.40" y="937.45" width="21.03" height="4.91" fill="#686868"/><rect x="1109.43" y="937.45" width="28.04" height="4.91" fill="#6b2f3a"/><rect x="1137.47" y="937.45" width="49.07" height="4.91" fill="#686868"/><rect x="1186.53" y="937.45" width="14.02" height="4.91" fill="#6b2f3a"/><rect x="1214.57" y="937.45" width="7.01" height="4.91" fill="#6b2f3a"/><rect x="1221.58" y="937.45" width="14.02" height="4.91" fill="#686868"/><rect x="1235.60" y="937.45" width="14.02" height="4.91" fill="#6b2f3a"/><rect x="1249.62" y="937.45" width="7.01" height="4.91" fill="#686868"/><rect x="1116.44" y="942.36" width="70.10" height="4.91" fill="#686868"/>
<rect x="808" y="1178" width="708" height="14" fill="#fffb50"/>
<g font-family="Liberation Sans" font-size="11" fill="#000" shape-rendering="auto"><text x="811.5" y="1188.5" text-anchor="middle" clip-path="url(#lc0)">101</text><text x="846.6" y="1188.5" text-anchor="middle" clip-path="url(#lc1)">96</text><text x="881.6" y="1188.5" text-anchor="middle" clip-path="url(#lc2)">91</text><text x="916.7" y="1188.5" text-anchor="middle" clip-path="url(#lc3)">86</text><text x="951.7" y="1188.5" text-anchor="middle" clip-path="url(#lc4)">81</text><text x="986.8" y="1188.5" text-anchor="middle" clip-path="url(#lc5)">76</text><text x="1021.8" y="1188.5" text-anchor="middle" clip-path="url(#lc6)">71</text><text x="1056.9" y="1188.5" text-anchor="middle" clip-path="url(#lc7)">66</text><text x="1091.9" y="1188.5" text-anchor="middle" clip-path="url(#lc8)">61</text><text x="1127.0" y="1188.5" text-anchor="middle" clip-path="url(#lc9)">56</text><text x="1162.0" y="1188.5" text-anchor="middle" clip-path="url(#lc10)">51</text><text x="1197.0" y="1188.5" text-anchor="middle" clip-path="url(#lc11)">46</text><text x="1232.1" y="1188.5" text-anchor="middle" clip-path="url(#lc12)">41</text><text x="1267.1" y="1188.5" text-anchor="middle" clip-path="url(#lc13)">36</text><text x="1302.2" y="1188.5" text-anchor="middle" clip-path="url(#lc14)">31</text><text x="1337.2" y="1188.5" text-anchor="middle" clip-path="url(#lc15)">26</text><text x="1372.3" y="1188.5" text-anchor="middle" clip-path="url(#lc16)">21</text><text x="1407.3" y="1188.5" text-anchor="middle" clip-path="url(#lc17)">16</text><text x="1442.4" y="1188.5" text-anchor="middle" clip-path="url(#lc18)">11</text><text x="1477.4" y="1188.5" text-anchor="middle" clip-path="url(#lc19)">6</text><text x="1512.5" y="1188.5" text-anchor="middle" clip-path="url(#lc20)">1</text></g>
</svg><!-- SWEATER END -->
<!-- CATIMG START --><svg style="left:0;top:0" width="2498" height="1402" viewBox="0 0 2498 1402">
<defs>
<linearGradient id="shg" x1="0" y1="0" x2="1" y2="0"><stop offset="0" stop-color="#94508a"/><stop offset="0.5" stop-color="#7f3d74"/><stop offset="1" stop-color="#94558d"/></linearGradient>
<linearGradient id="headg" x1="0" y1="0" x2="1" y2="0.3"><stop offset="0" stop-color="#ec9a72"/><stop offset="0.45" stop-color="#efb07a"/><stop offset="1" stop-color="#f1c98e"/></linearGradient>
<linearGradient id="eary" x1="0" y1="0" x2="0" y2="1"><stop offset="0" stop-color="#f1c38e"/><stop offset="1" stop-color="#eda774"/></linearGradient>
<linearGradient id="pinkin" x1="0" y1="0" x2="0" y2="1"><stop offset="0" stop-color="#f0a3bd"/><stop offset="0.4" stop-color="#e8739f"/><stop offset="1" stop-color="#e97aa5"/></linearGradient>
<linearGradient id="eary2" x1="0" y1="0" x2="0" y2="1"><stop offset="0" stop-color="#f3cc96" stop-opacity="1"/><stop offset="0.45" stop-color="#f2c48e" stop-opacity="0.75"/><stop offset="1" stop-color="#f0b27a" stop-opacity="0"/></linearGradient>
<linearGradient id="pawg" x1="0" y1="0" x2="0" y2="1"><stop offset="0" stop-color="#eda070"/><stop offset="1" stop-color="#f4d09a"/></linearGradient>
</defs>
<rect x="136.2" y="484.3" width="653.3" height="653.3" fill="#add3e2"/>
<g fill="#f4fbfd">
<circle cx="253" cy="757" r="8"/><circle cx="640" cy="657" r="2.8"/><circle cx="630" cy="686" r="3.5"/><circle cx="682" cy="785" r="5.5"/><circle cx="320" cy="889" r="5"/><circle cx="658" cy="1021" r="6.5"/><circle cx="458" cy="1092" r="3.5"/>
</g>
<!-- shadow -->
<ellipse cx="451" cy="1027.5" rx="175" ry="20.5" fill="url(#shg)"/>
<!-- tail -->
<clipPath id="tailclip"><path d="M565.7 1012.4 C590 1005 605 998 609.6 995.1 C620 988 625 980 628.4 974.7 C634 962 637 952 639.4 943.3 C643 925 645 915 647.3 904.1 C651 890 655 882 659.8 875.9 C666 866 671 862 675.5 857 C684 848 690 840 694.3 833.5 C697 828 696 826 690 824.5 C683 823 678 823 672.4 824.1 C662 826 652 829 644 833.5 C635 839 630 843 625.3 847.6 C619 853 615 856 612.7 858.6 C607 866 604 874 601.8 880.6 C598 892 596 900 595.5 907.3 L596 966 C590 985 580 1000 565.7 1008 Z"/></clipPath>
<path d="M565.7 1012.4 C590 1005 605 998 609.6 995.1 C620 988 625 980 628.4 974.7 C634 962 637 952 639.4 943.3 C643 925 645 915 647.3 904.1 C651 890 655 882 659.8 875.9 C666 866 671 862 675.5 857 C684 848 690 840 694.3 833.5 C697 828 696 826 690 824.5 C683 823 678 823 672.4 824.1 C662 826 652 829 644 833.5 C635 839 630 843 625.3 847.6 C619 853 615 856 612.7 858.6 C607 866 604 874 601.8 880.6 C598 892 596 900 595.5 907.3 L596 966 C590 985 580 1000 565.7 1008 Z" fill="#b14a40"/>
<g clip-path="url(#tailclip)">
<path d="M600 835 L637.8 841.4 L663 860.2 L710 856 L710 810 L600 810 Z" fill="#f4d6a0"/>
<path d="M650 832 C665 830 680 829 690 830 L675 845 C668 842 660 838 650 832 Z" fill="#f8e6be"/>
<path d="M602 873 C620 871 640 873 653 877 C657 882 656 888 650 892 C630 890 612 890 598 890 Z" fill="#e8895c"/>
<path d="M590 906 C610 904 630 905 652 907 L650 926 C630 925 610 925 590 927 Z" fill="#f5e3a8"/>
<path d="M590 906 L612 905 L611 926 L590 927 Z" fill="#d98ab0"/>
<path d="M590 939 C610 938 630 939 648 941 L642 961 C622 960 605 960 590 961 Z" fill="#fdf8ec"/>
<path d="M590 939 L606 938.5 L604 960.5 L590 961 Z" fill="#efd8b0"/>
<path d="M585 961 C605 960 625 960 642 961 L634 973 C615 972 600 972 585 973 Z" fill="#df7760"/>
<path d="M560 1010 C575 1002 592 990 602 982 L622 990 C608 1000 592 1010 576 1016 Z" fill="#d07fa0"/>
</g>
<path d="M565.7 1012.4 C590 1005 605 998 609.6 995.1 C620 988 625 980 628.4 974.7 C634 962 637 952 639.4 943.3 C643 925 645 915 647.3 904.1 C651 890 655 882 659.8 875.9 C666 866 671 862 675.5 857 C684 848 690 840 694.3 833.5 C697 828 696 826 690 824.5 C683 823 678 823 672.4 824.1 C662 826 652 829 644 833.5 C635 839 630 843 625.3 847.6 C619 853 615 856 612.7 858.6 C607 866 604 874 601.8 880.6 C598 892 596 900 595.5 907.3 L596 966 C590 985 580 1000 565.7 1008 Z" fill="none" stroke="#3a1018" stroke-width="3.2" stroke-linejoin="round"/>
<!-- left hip + back paw -->
<path d="M360 903 C345 915 336 935 335.9 955 C336 975 340 992 347.9 1003.7 C336 1010 332 1022 334 1030 C338 1038 345 1040 360 1040 L395 1040 L395 960 Z" fill="#e8a8c6" stroke="#3a1018" stroke-width="3" stroke-linejoin="round"/>
<path d="M340 925 C345 912 352 905 360 903 L362 945 C352 945 344 938 340 925 Z" fill="#c8585a"/>
<path d="M347.9 1003.7 C358 1002 372 1004 383 1012" fill="none" stroke="#3a1018" stroke-width="2.5"/>
<path d="M348 1020 L350 1038 M366 1022 L367 1039" stroke="#3a1018" stroke-width="1.8"/>
<!-- right hip -->
<path d="M556 884 C575 888 590 896 597 920 C600 945 598 970 592 985 C585 998 575 1004 560 1008 L530 1008 L530 900 Z" fill="#f0b078" stroke="#3a1018" stroke-width="3" stroke-linejoin="round"/>
<path d="M566 894 C582 900 592 915 593 940 C594 960 590 978 582 992 L578 990 C585 972 587 955 586 935 C584 915 578 905 566 900 Z" fill="#fff6ea"/>
<path d="M567 902 C575 905 580 915 580 930 C574 928 568 918 567 902 Z" fill="#df7f5a"/>
<!-- right back paw -->
<path d="M527.6 1001.7 C545 1000 560 1003 571.6 1007.7 C578 1013 578 1025 575.6 1030 C572 1037 566 1039 560 1039.7 L527.6 1039.7 Z" fill="#ffffff" stroke="#3a1018" stroke-width="3" stroke-linejoin="round"/>
<path d="M555 1020 L556 1038" stroke="#3a1018" stroke-width="1.8"/>
<!-- body -->
<path d="M368 846 C362 855 357 870 354 895 C352 920 354 945 360 965 C367 990 378 1005 388 1016 L392 1040 L530 1040 L528 1002 C540 1000 565 1000 568 995 C570 960 570 930 566 896 C562 875 555 860 545 846 Z" fill="#ffffff" stroke="#3a1018" stroke-width="3" stroke-linejoin="round"/>
<!-- pink lower left body -->
<path d="M356 945 C358 975 370 1005 390 1040 L402 1040 C384 1005 372 975 366 945 Z" fill="#eec0d4"/>
<path d="M436 1010 C450 1030 470 1040 480 1040 L440 1040 Z" fill="#e9acc8"/>
<!-- orange patches -->
<path d="M355 876 C365 875 372 882 371 890 C370 898 362 900 355 899 Z" fill="#eb9a62"/>
<path d="M398 920 C410 912 428 915 436 925 C440 935 438 950 432 958 L420 950 C415 940 405 930 398 920 Z" fill="#eb9a62"/>
<path d="M529 856 C545 860 556 875 556 892 C548 890 535 880 529 856 Z" fill="#eb9a62"/>
<path d="M549 898 C560 896 566 902 566 910 C558 912 550 906 549 898 Z" fill="#eb9a62"/>
<path d="M518 940 C526 935 536 936 540 942 C536 952 526 956 518 950 Z" fill="#eb9a62"/>
<path d="M474 948 C478 944 484 946 486 952 C482 956 476 955 474 948 Z" fill="#eb9a62"/>
<path d="M480 990 C495 980 520 982 528 992 L528 1005 L480 1005 Z" fill="#eb9a62"/>
<!-- front paws -->
<path d="M388 1010 C392 1030 398 1040 410 1041.7 L436 1041.7 C438 1030 436 1018 434 1008 Z" fill="url(#pawg)"/>
<path d="M476 1000 C474 1020 476 1035 482 1043.7 L527.6 1043.7 C530 1030 530 1015 528 1000 Z" fill="url(#pawg)"/>
<g fill="none" stroke="#3a1018" stroke-width="3" stroke-linecap="round">
<path d="M419.8 923.8 C428 960 434 1000 435.8 1041"/>
<path d="M485.7 939.8 C478 970 474 1010 476 1040"/>
<path d="M539.6 909.8 C536 940 530 975 527.6 1040"/>
<path d="M392 1040 L436 1041.7 M476 1042 L528 1041.7"/>
</g>
<path d="M405 1022 L406 1039 M420 1024 L421 1040 M494 1024 L495 1041 M510 1024 L511 1041" stroke="#3a1018" stroke-width="1.8"/>
<!-- collar -->
<path d="M379 845 C395 860 420 866 445 868 L445 854 C420 852 398 848 383 840 Z" fill="#5b98c8" stroke="#2a2a44" stroke-width="2.2" stroke-linejoin="round"/>
<path d="M545.6 844 C530 856 515 862 495 864 L495 850 C515 848 532 844 542 838 Z" fill="#5b98c8" stroke="#2a2a44" stroke-width="2.2" stroke-linejoin="round"/>
<circle cx="455.5" cy="866" r="15" fill="#77b7e0" stroke="#2a2a44" stroke-width="2.5"/>
<circle cx="492" cy="864.7" r="13.5" fill="#77b7e0" stroke="#2a2a44" stroke-width="2.5"/>
<ellipse cx="458" cy="868" rx="9" ry="5" fill="#a0d4f0"/>
<circle cx="457" cy="897" r="16.5" fill="#6fb3df" stroke="#2a2a44" stroke-width="2.5"/>
<path d="M455 883 L457 899" stroke="#2a2a44" stroke-width="2"/>
<!-- head -->
<path id="headp" d="M348.5 574.3 C370 586 400 610 422.7 632.8 C442 630 460 629 479.7 630 C488 631 496 632 502.8 634.2 C530 610 555 588 581.2 575 C586 573 589 576 589.5 581 C593 605 596 630 595.5 650 C594 665 591 680 589 697 C597 708 603 722 609.8 741.4 L632.6 730 C628 742 624 750 619.8 754.2 C615 758 612 760 609.8 761.3 L630.5 765 C625 772 620 776 615.5 777 C610 778 604 780 601.2 782.7 C601 790 600 800 597 808.4 C592 815 588 819 582.7 822.7 C575 830 568 834 560 837 C550 841 540 844 531.3 845.5 C520 848 510 849 502.8 849.8 C490 850.5 475 851 460 851.2 C445 851 432 850.5 412.7 849.8 C400 848 392 847 384 845.5 C374 843 366 840 358.4 837 C350 832 342 826 335.6 821.3 C328 814 323 808 320 802.7 C316 796 314 792 312.8 789 L327 785.6 C318 782 310 780 305.7 780 C300 773 296 768 294.3 764.2 L320 760.6 C312 756 305 751 301.4 747 C298 741 295 735 293.5 730.7 L314.2 737 C315 728 316 722 317 718.5 C320 710 325 702 330 697 L339.9 689.8 C335 686 331 677 329 667 C327 640 329 615 333 600 C337 587 342 578 348.5 574.3 Z" fill="url(#headg)" stroke="#3a1018" stroke-width="3.2" stroke-linejoin="round"/>
<clipPath id="headclip"><use href="#headp"/></clipPath>
<g clip-path="url(#headclip)">
<!-- ear yellow top-left -->
<rect x="300" y="570" width="340" height="140" fill="url(#eary2)"/>
<!-- white blaze + face -->
<path d="M479.7 628 C492 632 500 633 503 634.2 C512 640 518 646 520 648.4 C526 656 527 662 525.6 662.7 C524 675 522 682 520 688.4 C512 697 506 700 502.8 702.7 C496 712 494 720 494 724 C500 760 540 770 580 778 C600 790 600 800 598 804 C560 840 510 845 460 846 C410 845 370 840 340 830 C322 815 318 800 326 788 C335 776 355 772 375 774 C400 778 425 772 432 760 C436 745 438 735 440 728.3 C450 722 455 720 458.5 717 C468 705 472 695 475.7 688.4 C478 670 479 650 479.7 628 Z" fill="#ffffff"/>
<path d="M328 782 C340 776 356 778 362 788 C362 798 355 804 345 804 C336 800 330 792 328 782 Z" fill="#f5dcc0"/>
<!-- pink chin band -->
<path d="M300 780 C350 815 410 836 460 836 C510 836 565 818 620 780 L620 870 L300 870 Z" fill="#e8a4c2"/>
<path d="M318 803 C325 795 335 800 338 812 C332 818 322 815 318 803 Z" fill="#c8505a"/>
<path d="M598 800 C604 792 612 796 612 806 C606 812 598 810 598 800 Z" fill="#c8505a"/>
<!-- orange patch right -->
<path d="M503 705 C510 695 525 690 535 700 C540 715 530 725 518 725 C508 720 503 712 503 705 Z" fill="#edae78" opacity="0.8"/>
<!-- stripes -->
<path d="M428.4 634 C438 632 445 632 447 634 C446 655 446 675 447 690 C438 682 432 670 430 655 Z" fill="#b9503d"/>
<path d="M462.6 632.8 C470 632 476 632 479.7 633 C479 655 478 680 476 694 C470 675 464 655 462.6 632.8 Z" fill="#b9503d"/>
<path d="M447 634 C452 633 458 633 462.6 633 C463 650 466 670 470 688 C462 680 455 670 450 660 Z" fill="#fff7ea"/>
<!-- cheek stripes left -->
<path d="M300 725 C318 728 332 732 340 738 C335 745 322 748 310 748 Z" fill="#b9434a"/>
<path d="M290 760 C308 762 325 768 336 776 C330 784 318 786 305 784 Z" fill="#b9434a"/>
<path d="M318 802 C335 808 355 820 368 834 C352 838 335 830 322 820 Z" fill="#b9434a"/>
<path d="M300 730 C312 745 318 760 318 790 L300 790 Z" fill="#e07a6a" opacity="0.7"/>
<!-- cheek stripes right -->
<path d="M575.5 735.5 C590 730 600 729 612 732 C608 745 595 750 580 751 Z" fill="#c0584a"/>
<path d="M580 760 C595 755 610 756 625 762 C615 775 600 778 585 776 Z" fill="#c55d4e"/>
<path d="M555 820 C570 812 585 806 600 800 C600 815 585 830 562 838 Z" fill="#c65a52"/>
<path d="M585 728 C600 735 615 745 630 760 L630 800 C615 790 600 775 590 760 Z" fill="#e5856a" opacity="0.6"/>
</g>
<!-- blush -->
<ellipse cx="388.4" cy="684" rx="14.5" ry="18" fill="#e98e6c"/>
<ellipse cx="542.7" cy="677" rx="10" ry="12" fill="#edac7a"/>
<!-- ear inner -->
<path d="M353.5 589.2 L397.7 651.3 C380 656 362 665 349.9 672.7 C346 645 348 612 353.5 589.2 Z" fill="url(#pinkin)" stroke="#3a1018" stroke-width="2.8" stroke-linejoin="round"/>
<path d="M577.7 590 L528.4 653.4 C545 658 562 665 574 670.6 C579 645 580 615 577.7 590 Z" fill="url(#pinkin)" stroke="#3a1018" stroke-width="2.8" stroke-linejoin="round"/>
<path d="M448 630 C456 626 465 624 471 623" fill="none" stroke="#3a1018" stroke-width="2.2" stroke-linecap="round"/>
<!-- eyes -->
<circle cx="400.2" cy="743.5" r="26.5" fill="#f3d5c2" stroke="#3a1018" stroke-width="2.6"/>
<circle cx="400.7" cy="741" r="24" fill="#4c1426"/>
<circle cx="401.3" cy="724.5" r="3.2" fill="#fff"/>
<circle cx="522.5" cy="744" r="26.5" fill="#f3d5c2" stroke="#3a1018" stroke-width="2.6"/>
<circle cx="522" cy="741.5" r="24" fill="#5a1830"/>
<ellipse cx="504.5" cy="733" rx="2.5" ry="3.5" fill="#f2c8cc" transform="rotate(30 504.5 733)"/>
<circle cx="511" cy="727" r="1.8" fill="#f2d8dc"/>
<!-- nose & mouth -->
<path d="M454 756 C458 754 467 754 471 756 C470 762 466 765 462.5 765 C459 765 455 762 454 756 Z" fill="#e87598" stroke="#3a1018" stroke-width="1.6"/>
<path d="M462.5 765 L462.5 772 C460 781 447 784 438 776 M462.5 772 C465 781 478 784 487 776" fill="none" stroke="#3a1018" stroke-width="2.4" stroke-linecap="round"/>
<!-- whiskers -->
<g fill="none" stroke="#2a0c14" stroke-width="1.8" stroke-linecap="round">
<path d="M398.4 782.7 C380 776 350 772 327 774"/>
<path d="M395.5 787 C365 785 335 786 314 790 C300 800 285 815 275.7 832.7"/>
<path d="M392.7 793.4 C365 798 345 806 330 814 C310 830 295 855 288.5 878.3"/>
<path d="M528.5 782 C545 775 560 772.8 580 774 C595 776 610 781 621.2 785.6"/>
<path d="M525 787.7 C545 785 560 785 574 785.6 C590 789 605 795 618.3 801.3"/>
<path d="M530 793.4 C550 797 565 800 581.3 807 C595 815 610 825 619 832.7"/>
<path d="M581.3 798.4 C595 815 605 835 613.4 857"/>
</g>
<!-- selection -->
<rect x="136.2" y="484.3" width="653.3" height="653.3" fill="none" stroke="#b6c8f6" stroke-width="1.5"/>
<line x1="462.85" y1="405" x2="462.85" y2="484.3" stroke="#b6c8f6" stroke-width="1.5"/>
<g fill="none" stroke="#b3c6f6" stroke-width="1.5">
<rect x="449.6" y="392.2" width="26.5" height="26.5"/>
<rect x="124.4" y="471.5" width="26.5" height="26.5"/>
<rect x="449.6" y="471.5" width="26.5" height="26.5"/>
<rect x="775.5" y="471.5" width="26.5" height="26.5"/>
<rect x="124.4" y="797.5" width="26.5" height="26.5"/>
<rect x="775.5" y="797.5" width="26.5" height="26.5"/>
<rect x="124.4" y="1124.3" width="26.5" height="26.5"/>
<rect x="449.6" y="1124.3" width="26.5" height="26.5"/>
<rect x="775.5" y="1124.3" width="26.5" height="26.5"/>
</g>
</svg>
<!-- CATIMG END -->

<!-- TOOLBAR -->
<div class="a" style="left:786px;top:126px;width:958px;height:100px;border-radius:22px;background:#f7f7f7;box-shadow:0 1px 5px rgba(0,0,0,.13)"></div>
<svg style="left:861px;top:166px" width="6" height="22" viewBox="0 0 6 22"><g fill="#9a9a9a"><circle cx="3" cy="3" r="1.6"/><circle cx="3" cy="11" r="1.6"/><circle cx="3" cy="19" r="1.6"/></g></svg>
<div class="btn" style="left:886px;top:142px;width:100px;height:68px"></div>
<div class="btn" style="left:994px;top:142px;width:100px;height:68px"></div>
<div class="btn" style="left:1102px;top:142px;width:100px;height:68px"></div>
<div class="btn" style="left:1244px;top:142px;width:112px;height:68px"></div>
<div class="btn" style="left:1364px;top:142px;width:100px;height:68px"></div>
<div class="btn" style="left:1472px;top:142px;width:100px;height:68px"></div>
<div class="btn" style="left:1580px;top:142px;width:100px;height:68px;border-color:#3b82e6;background:#f0f1f3"></div>
<svg style="left:920px;top:160px" width="32" height="32" viewBox="0 0 24 24" fill="none" stroke="#1a1a1a" stroke-width="2" stroke-linecap="round" stroke-linejoin="round"><path d="M8 8h8v8h-8z"/><path d="M4 4v.01M8 4v.01M12 4v.01M16 4v.01M20 4v.01M4 20v.01M8 20v.01M12 20v.01M16 20v.01M20 20v.01M4 8v.01M4 12v.01M4 16v.01M20 8v.01M20 12v.01M20 16v.01"/></svg>
<svg style="left:1028px;top:160px" width="32" height="32" viewBox="0 0 24 24" fill="none" stroke="#1a1a1a" stroke-width="2" stroke-linecap="round" stroke-linejoin="round"><path d="M6 21l15 -15l-3 -3l-15 15l3 3"/><path d="M15 6l3 3"/><path d="M9 3a2 2 0 0 0 2 2a2 2 0 0 0 -2 2a2 2 0 0 0 -2 -2a2 2 0 0 0 2 -2"/><path d="M19 13a2 2 0 0 0 2 2a2 2 0 0 0 -2 2a2 2 0 0 0 -2 -2a2 2 0 0 0 2 -2"/></svg>
<svg style="left:1136px;top:160px" width="32" height="32" viewBox="0 0 24 24" fill="none" stroke="#1a1a1a" stroke-width="2" stroke-linecap="round" stroke-linejoin="round"><path d="M11 7l6 6"/><path d="M4 16l11.7 -11.7a1 1 0 0 1 1.4 0l2.6 2.6a1 1 0 0 1 0 1.4l-11.7 11.7h-4v-4z"/></svg>
<svg style="left:1266px;top:160px" width="32" height="32" viewBox="0 0 24 24" fill="none" stroke="#1a1a1a" stroke-width="2.1" stroke-linecap="round" stroke-linejoin="round"><path d="M3 9l4 -4l4 4m-4 -4v14"/><path d="M21 15l-4 4l-4 -4m4 4v-14"/></svg>
<svg style="left:1312px;top:166px" width="20" height="20" viewBox="0 0 24 24" fill="none" stroke="#1a1a1a" stroke-width="2" stroke-linecap="round" stroke-linejoin="round"><path d="M5 9l7 7l7 -7"/></svg>
<svg style="left:1398px;top:160px" width="32" height="32" viewBox="0 0 24 24" fill="none" stroke="#1a1a1a" stroke-width="2" stroke-linecap="round" stroke-linejoin="round"><path d="M3 21v-4a4 4 0 1 1 4 4h-4"/><path d="M21 3a16 16 0 0 0 -12.8 10.2"/><path d="M21 3a16 16 0 0 1 -10.2 12.8"/><path d="M10.6 9a9 9 0 0 1 4.4 4.4"/></svg>
<svg style="left:1506px;top:160px" width="32" height="32" viewBox="0 0 24 24" fill="none" stroke="#1a1a1a" stroke-width="2" stroke-linecap="round" stroke-linejoin="round"><path d="M19 20h-10.5l-4.21 -4.3a1 1 0 0 1 0 -1.41l10 -10a1 1 0 0 1 1.41 0l5 5a1 1 0 0 1 0 1.41l-9.2 9.3"/><path d="M18 13.3l-6.3 -6.3"/></svg>

<!-- PANEL -->
<div class="a" style="left:1598px;top:145px;width:881px;height:1152px;border-radius:17px;background:#f7f7f7;box-shadow:0 1px 7px rgba(0,0,0,.15)"></div>
<svg style="left:2024px;top:178px" width="28" height="8" viewBox="0 0 28 8"><g fill="#9a9a9a"><circle cx="4" cy="4" r="2"/><circle cx="14" cy="4" r="2"/><circle cx="24" cy="4" r="2"/></g></svg>
<svg style="left:2437px;top:170px" width="18" height="18" viewBox="0 0 18 18"><path d="M2 2L16 16M16 2L2 16" stroke="#888" stroke-width="2.6" stroke-linecap="round"/></svg>
<div class="a" style="left:1718px;top:213px;width:641px;height:1067px;border-radius:22px;background:#f7f8fa;box-shadow:0 2px 8px rgba(0,0,0,.12)"></div>
<div class="a" style="left:1751px;top:245px;width:285px;height:64px;border-radius:16px;background:#ea6237"></div>
<div class="t" style="left:1767.6px;top:262.2px;font-size:29.0px;letter-spacing:0.0px;-webkit-text-stroke:0.85px #fff;color:#fff">Вклеить в вязание</div>
<div class="t" style="left:1749.9px;top:326.2px;font-size:24.9px;letter-spacing:0.03px;color:#a3a3a3">Сколько цветов пряжи использовать?</div>
<div class="t" style="left:1750.9px;top:352.4px;font-size:22.8px;letter-spacing:-0.02px;line-height:26px;color:#b3b3b3">(Цвета подбираются из всей графики; используется<br>пряжа проекта + до 4 новых)</div>
<div class="a" style="left:1751px;top:415px;width:100px;height:52px;border-radius:10px;background:#fff;border:2px solid #c8c8c8"></div>
<div class="t" style="left:1767.9px;top:426.8px;font-size:28.7px;letter-spacing:0px;color:#111">4</div>
<div class="btn" style="left:1751px;top:483px;width:63px;height:67px;border-radius:20px"></div>
<div class="btn" style="left:1815px;top:483px;width:63px;height:67px;border-radius:20px"></div>
<div class="btn" style="left:1895px;top:483px;width:63px;height:67px;border-radius:20px"></div>
<div class="btn" style="left:1975px;top:483px;width:63px;height:67px;border-radius:20px"></div>
<svg style="left:1768px;top:501.5px" width="28" height="28" viewBox="0 0 24 24" fill="none" stroke="#1a1a1a" stroke-width="2" stroke-linecap="round" stroke-linejoin="round"><rect x="7" y="3" width="14" height="14" rx="2.7"/><path d="M4 7.3a2 2 0 0 0-1 1.7v10c0 1.1.9 2 2 2h10c.75 0 1.16-.39 1.5-1"/><path d="M17 7h.01"/><path d="M7 13l3.6-3.6a1.2 1.2 0 0 1 1.7 0l3.7 3.6"/><path d="M15 12l1.6-1.6a1.2 1.2 0 0 1 1.7 0l2.7 2.6"/></svg>
<svg style="left:1832px;top:501.5px" width="28" height="28" viewBox="0 0 24 24" fill="none" stroke="#1a1a1a" stroke-width="2" stroke-linecap="round" stroke-linejoin="round"><circle cx="6.6" cy="10.9" r="6.1"/><rect x="10.9" y="10.4" width="10.3" height="10.9" rx="2.6"/></svg>
<svg style="left:1912px;top:501.5px" width="28" height="28" viewBox="0 0 24 24" fill="none" stroke="#1a1a1a" stroke-width="2" stroke-linecap="round" stroke-linejoin="round"><path d="M3 20h4M14 20h7M6.9 15h6.9M10.2 6.3l5.3 13.7M5 20l6-16h2l7 16"/></svg>
<svg style="left:1992px;top:501.5px" width="28" height="28" viewBox="0 0 24 24" fill="none" stroke="#1a1a1a" stroke-width="2" stroke-linecap="round" stroke-linejoin="round"><rect x="3" y="3" width="4" height="4" rx="1"/><rect x="17" y="3" width="4" height="4" rx="1"/><rect x="3" y="17" width="4" height="4" rx="1"/><rect x="17" y="17" width="4" height="4" rx="1"/><path d="M5 7v10M7 5h10M7 19h10M19 7v10"/></svg>
<div class="t" style="left:1749.6px;top:585.3px;font-size:24.2px;letter-spacing:0.02px;color:#454545">Выбрано: image</div>
<div class="t" style="left:1749.6px;top:629.0px;font-size:24.8px;letter-spacing:-0.02px;color:#454545">Цвета для новых фигур и текста</div>
<div class="a" style="left:1750px;top:671px;width:56px;height:56px;border-radius:12px;background:#4a89dc;border:3px solid #b1b5ba;box-shadow:0 1px 3px rgba(0,0,0,.12)"></div>
<div class="a" style="left:1807px;top:671px;width:56px;height:56px;border-radius:12px;background:#fff;border:3px solid #4088e0;box-shadow:0 1px 3px rgba(0,0,0,.12)"></div>
<div class="t" style="left:1750.0px;top:745.6px;font-size:24.9px;letter-spacing:0.01px;color:#a5a5a5">Толщина обводки</div>
<div class="a" style="left:1754px;top:784px;width:481px;height:28px;border-radius:14px;background:#f6f6f6;border:2px solid #cdcdcd;overflow:hidden"><div style="width:75px;height:100%;background:#9aabbb"></div></div>
<div class="a" style="left:1815.75px;top:784.75px;width:25.5px;height:25.5px;border-radius:50%;background:#fff;border:1.5px solid #cacaca;box-shadow:0 1px 3px rgba(0,0,0,.15)"></div>
<div class="t" style="left:2014.2px;top:827.0px;font-size:23.6px;letter-spacing:0.05px;color:#a5a5a5">13%</div>
<div class="a" style="left:1750px;top:868px;width:36px;height:36px;border-radius:18px;background:#fff;border:2px solid #c8c8c8"></div>
<div class="t" style="left:1749.0px;top:929.0px;font-size:24.5px;letter-spacing:0.04px;color:#a5a5a5">Интенсивность тона</div>
<div class="a" style="left:1754px;top:968px;width:481px;height:28px;border-radius:14px;background:#f6f6f6;border:2px solid #cdcdcd;overflow:hidden"><div style="width:286px;height:100%;background:#9aabbb"></div></div>
<div class="a" style="left:2026.05px;top:969.25px;width:25.5px;height:25.5px;border-radius:50%;background:#fff;border:1.5px solid #cacaca;box-shadow:0 1px 3px rgba(0,0,0,.15)"></div>
<div class="t" style="left:2013.8px;top:1010.0px;font-size:24.3px;letter-spacing:-0.05px;color:#a5a5a5">60%</div>
<div class="t" style="left:1749.0px;top:1069.5px;font-size:24.6px;letter-spacing:0.05px;color:#a5a5a5">Прозрачность слоя с графикой</div>
<div class="a" style="left:1754px;top:1109px;width:481px;height:28px;border-radius:14px;background:#9aabbb;border:2px solid #cdcdcd"></div>
<div class="a" style="left:2207.65px;top:1109.95px;width:25.5px;height:25.5px;border-radius:50%;background:#fff;border:1.5px solid #cacaca;box-shadow:0 1px 3px rgba(0,0,0,.15)"></div>
<div class="t" style="left:2007.6px;top:1151.6px;font-size:24.1px;letter-spacing:-0.1px;color:#a5a5a5">100%</div>
<div class="a" style="left:1758.5px;top:1215.5px;width:27.5px;height:27.5px;border-radius:4px;background:#3478f6"></div>
<svg style="left:1758.5px;top:1215.5px" width="28" height="28" viewBox="0 0 28 28"><path d="M5.5 14l6 6 11.2-14.3" fill="none" stroke="#fff" stroke-width="4.4" stroke-linecap="round" stroke-linejoin="round"/></svg>
<svg style="left:1809px;top:1217px" width="26" height="22" viewBox="0 0 26 22"><path d="M2 11 Q13 -2 24 11 Q13 24 2 11Z" fill="none" stroke="#111" stroke-width="2.4" stroke-linejoin="round"/><circle cx="13" cy="11" r="2.4" fill="none" stroke="#111" stroke-width="2.1"/></svg>
<div class="t" style="left:1851.2px;top:1210.8px;font-size:33.4px;letter-spacing:-0.02px;color:#111">Скрыть/показать графику</div>

<!-- ZOOM CONTROLS -->
<div class="btn" style="left:2148px;top:1312px;width:64px;height:64px;border-radius:18px"></div>
<div class="a" style="left:2169.7px;top:1339.5px;width:20.7px;height:5.5px;background:#474747"></div>
<div class="btn" style="left:2228px;top:1312px;width:91px;height:64px;border-radius:18px"></div>
<div class="t" style="left:2245.8px;top:1329.0px;font-size:28.3px;letter-spacing:-0.05px;color:#111">35%</div>
<div class="btn" style="left:2336px;top:1312px;width:64px;height:64px;border-radius:18px"></div>
<div class="a" style="left:2359.1px;top:1339.5px;width:21.1px;height:5.5px;background:#474747"></div><div class="a" style="left:2366.9px;top:1332px;width:5.5px;height:20.4px;background:#474747"></div>
<div class="btn" style="left:2416px;top:1312px;width:52px;height:64px;border-radius:18px"></div>
<div class="t" style="left:2435.4px;top:1329.3px;font-size:28.7px;letter-spacing:0px;color:#111">?</div>

<!-- UNDO/REDO -->
<div class="a" style="left:52px;top:1200px;width:148px;height:134px;border-radius:22px;background:#f8f8f8;box-shadow:0 2px 8px rgba(0,0,0,.14)"></div>
<svg style="left:112px;top:1233px" width="28" height="8" viewBox="0 0 28 8"><g fill="#9a9a9a"><circle cx="4" cy="4" r="2"/><circle cx="14" cy="4" r="2"/><circle cx="24" cy="4" r="2"/></g></svg>
<div class="a" style="left:68px;top:1268px;width:50px;height:50px;border-radius:6px;background:#efefef;border:2px solid #6a6a6a"></div>
<svg style="left:81px;top:1278px" width="24" height="24" viewBox="0 0 24 24"><path d="M3 12h18M3 12l7-7M3 12l7 7" fill="none" stroke="#000" stroke-width="2.6" stroke-linecap="round" stroke-linejoin="round"/></svg>
<div class="a" style="left:134px;top:1268px;width:50px;height:50px;border-radius:6px;background:#efefef;border:2px solid #e2e2e2"></div>
<svg style="left:147px;top:1278px" width="24" height="24" viewBox="0 0 24 24"><path d="M3 12h18M21 12l-7-7M21 12l-7 7" fill="none" stroke="#c4c4c4" stroke-width="2.4" stroke-linecap="round" stroke-linejoin="round"/></svg>

<!-- VERSION -->
<div class="a" style="left:14px;top:1348px;width:111px;height:44px;background:#f8f8f8"></div>
<div class="t" style="left:30.0px;top:1358.1px;font-size:24.0px;letter-spacing:0.05px;color:#919191">v0.10.0</div>
<!-- window corners -->
<svg style="left:0;top:1370px" width="40" height="32" viewBox="0 0 40 32"><path d="M0 8 A24 24 0 0 0 24 32 L0 32Z" fill="#c6c6c6"/></svg>
<svg style="left:2458px;top:1370px" width="40" height="32" viewBox="0 0 40 32"><path d="M40 8 A24 24 0 0 1 16 32 L40 32Z" fill="#c6c6c6"/><path d="M40 14 A20 20 0 0 1 23 32 L40 32Z" fill="#0b0b5a"/></svg>


</body></html>
